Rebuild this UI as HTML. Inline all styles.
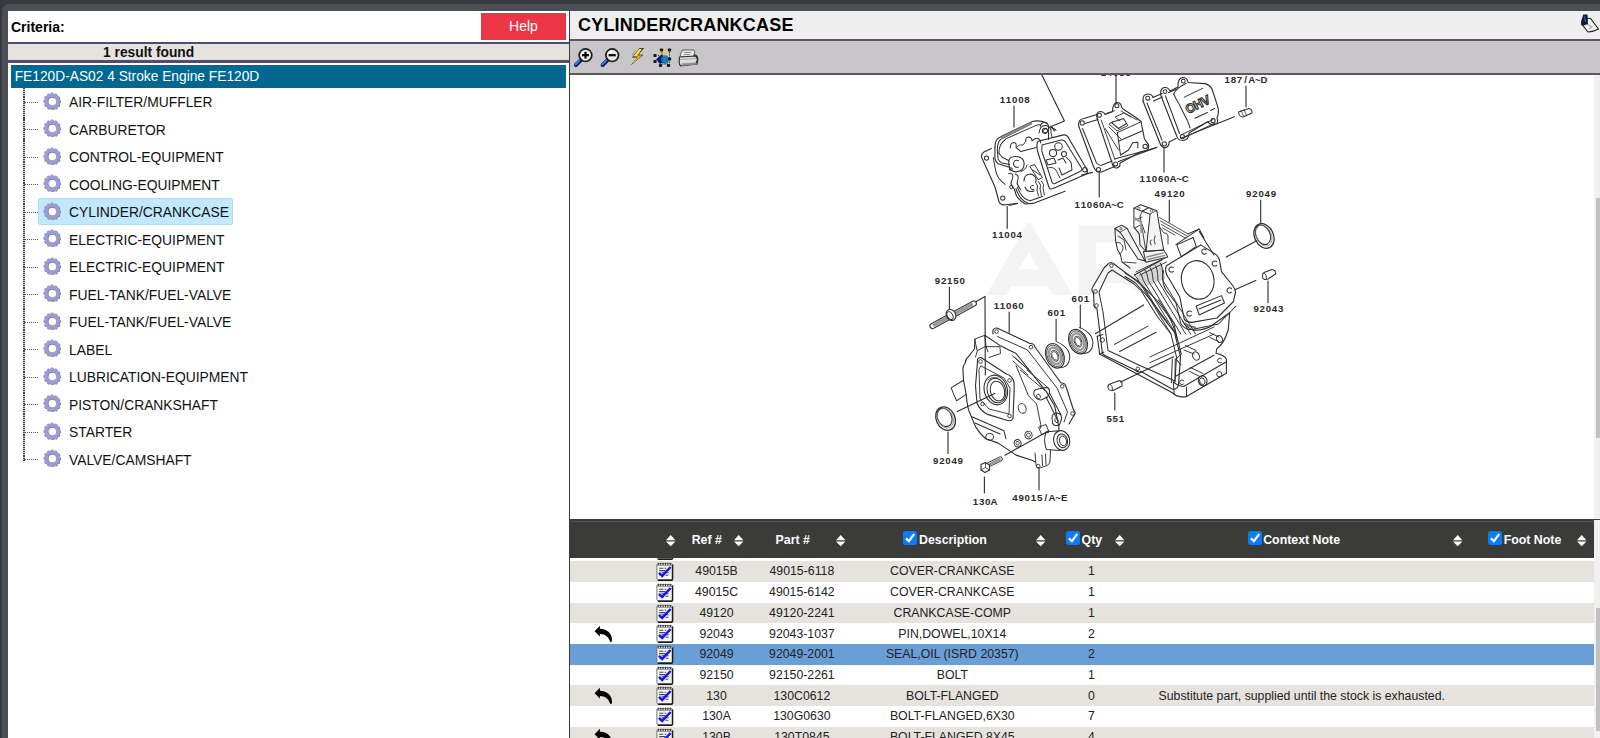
<!DOCTYPE html>
<html><head><meta charset="utf-8">
<style>
*{margin:0;padding:0;box-sizing:border-box}
html,body{width:1600px;height:738px;overflow:hidden;background:#36393e;font-family:"Liberation Sans",sans-serif;color:#111}
.a{position:absolute}
#frame{left:2px;top:4px;width:1700px;height:800px;background:#4c4f55;border-radius:7px 0 0 0}
#left{left:8px;top:11px;width:561px;height:727px;background:#fff;overflow:hidden}
#crit{left:3px;top:8px;font-size:14px;font-weight:bold;color:#000;line-height:16px}
#help{left:473px;top:2px;width:85px;height:26.5px;background:#ee3545;color:#fff;font-size:14px;text-align:center;line-height:26px}
#l1{left:0;top:31px;width:561px;height:2px;background:#4e4d6e}
#res{left:0;top:33px;width:561px;height:16px;background:#e6e3df}
#restx{left:95px;top:1px;font-size:13.8px;font-weight:bold;line-height:16px;color:#111;white-space:nowrap}
#l2{left:0;top:49px;width:561px;height:2.5px;background:#4e4d6e}
#teal{left:2.7px;top:54px;width:555.5px;height:23px;background:#006890;color:#fff;font-size:13.75px;line-height:24px;padding-left:4px;white-space:nowrap}
#divider{left:569px;top:11px;width:1.2px;height:727px;background:#3a3a3a}
#right{left:570px;top:11px;width:1030px;height:727px;background:#fff;overflow:hidden}
#hdr{left:0;top:0;width:1030px;height:27.5px;background:#eeeeee}
#title{left:8px;top:4.3px;letter-spacing:0.2px;font-size:18px;font-weight:bold;color:#000;line-height:20px;white-space:nowrap}
#hb{left:0;top:27.5px;width:1030px;height:2px;background:#5a5a5a}
#tb{left:0;top:29.5px;width:1030px;height:33px;background:#c8c6c8}
#tbb{left:0;top:62.3px;width:1030px;height:1.5px;background:#5a5a5a}
.ti{position:absolute;left:61px;font-size:13.85px;line-height:16px;color:#111;white-space:nowrap}
.gear{position:absolute;left:35px;width:18px;height:18px}
.vd{position:absolute;left:14.9px;width:1.7px;background:repeating-linear-gradient(to bottom,#444 0 1.1px,#c4c4c4 1.1px 2.1px)}
.hd{position:absolute;left:16px;width:14px;border-top:1px dotted #555;height:0}
#sel{left:30.2px;top:187.2px;width:195.2px;height:27.3px;background:#c1e8fb;border:1px solid #b0dcf2;border-radius:2px}
#imgarea{left:0;top:63.8px;width:1024px;height:444.2px;background:#fff}
#vsb{left:1024px;top:63.8px;width:6px;height:444.2px;background:#f0f0f0}
#thhdr{left:1px;top:507.7px;width:1029px;height:39px;background:#3b3c3a;box-shadow:-1px 0 0 #3b3c3a}
.th{position:absolute;top:13.8px;transform:scaleY(1.1);transform-origin:50% 2.7px;font-size:12.35px;font-weight:bold;color:#fff;white-space:nowrap;line-height:14px}
.cb{width:14px;height:14px;background:#0a7aff;border-radius:2.5px}
.row{position:absolute;left:1px;width:1023px;height:20.75px;overflow:hidden}
.row .c{position:absolute;top:2.3px;transform:scaleY(1.1);transform-origin:50% 1.3px;font-size:12.3px;line-height:14px;color:#222;white-space:nowrap;text-align:center}
#tsb{left:1024px;top:546.7px;width:6px;height:200px;background:#f0f0f0}
</style></head><body>
<div id="frame" class="a"></div>
<div id="left" class="a">
  <div id="crit" class="a">Criteria:</div>
  <div id="help" class="a">Help</div>
  <div id="l1" class="a"></div>
  <div id="res" class="a"><div id="restx" class="a">1 result found</div></div>
  <div id="l2" class="a"></div>
  <div id="teal" class="a">FE120D-AS02 4 Stroke Engine FE120D</div>
  <div id="sel" class="a"></div>

<div class="vd" style="top:77.0px;height:372.5px"></div>
<div class="hd" style="top:90.7px"></div>
<svg class="gear" style="top:80.6px" viewBox="0 0 18 18"><g transform="translate(9,9.2)"><path d="M7.58 -1.38 L8.65 -0.96 L8.65 0.96 L7.58 1.38 L7.25 2.59 L7.97 3.50 L7.01 5.15 L5.87 4.98 L4.98 5.87 L5.15 7.01 L3.50 7.97 L2.59 7.25 L1.38 7.58 L0.96 8.65 L-0.96 8.65 L-1.38 7.58 L-2.59 7.25 L-3.50 7.97 L-5.15 7.01 L-4.98 5.87 L-5.87 4.98 L-7.01 5.15 L-7.97 3.50 L-7.25 2.59 L-7.58 1.38 L-8.65 0.96 L-8.65 -0.96 L-7.58 -1.38 L-7.25 -2.59 L-7.97 -3.50 L-7.01 -5.15 L-5.87 -4.98 L-4.98 -5.87 L-5.15 -7.01 L-3.50 -7.97 L-2.59 -7.25 L-1.38 -7.58 L-0.96 -8.65 L0.96 -8.65 L1.38 -7.58 L2.59 -7.25 L3.50 -7.97 L5.15 -7.01 L4.98 -5.87 L5.87 -4.98 L7.01 -5.15 L7.97 -3.50 L7.25 -2.59Z" fill="#77778a" transform="translate(0.5,0.6)"/><path d="M7.58 -1.38 L8.65 -0.96 L8.65 0.96 L7.58 1.38 L7.25 2.59 L7.97 3.50 L7.01 5.15 L5.87 4.98 L4.98 5.87 L5.15 7.01 L3.50 7.97 L2.59 7.25 L1.38 7.58 L0.96 8.65 L-0.96 8.65 L-1.38 7.58 L-2.59 7.25 L-3.50 7.97 L-5.15 7.01 L-4.98 5.87 L-5.87 4.98 L-7.01 5.15 L-7.97 3.50 L-7.25 2.59 L-7.58 1.38 L-8.65 0.96 L-8.65 -0.96 L-7.58 -1.38 L-7.25 -2.59 L-7.97 -3.50 L-7.01 -5.15 L-5.87 -4.98 L-4.98 -5.87 L-5.15 -7.01 L-3.50 -7.97 L-2.59 -7.25 L-1.38 -7.58 L-0.96 -8.65 L0.96 -8.65 L1.38 -7.58 L2.59 -7.25 L3.50 -7.97 L5.15 -7.01 L4.98 -5.87 L5.87 -4.98 L7.01 -5.15 L7.97 -3.50 L7.25 -2.59Z" fill="#9c9cd2"/><circle r="4.1" fill="#7a7a9a"/><circle r="3.8" cx="0.35" cy="0.35" fill="#fff"/></g></svg>
<div class="ti" style="top:83.0px">AIR-FILTER/MUFFLER</div>
<div class="hd" style="top:118.2px"></div>
<svg class="gear" style="top:108.1px" viewBox="0 0 18 18"><g transform="translate(9,9.2)"><path d="M7.58 -1.38 L8.65 -0.96 L8.65 0.96 L7.58 1.38 L7.25 2.59 L7.97 3.50 L7.01 5.15 L5.87 4.98 L4.98 5.87 L5.15 7.01 L3.50 7.97 L2.59 7.25 L1.38 7.58 L0.96 8.65 L-0.96 8.65 L-1.38 7.58 L-2.59 7.25 L-3.50 7.97 L-5.15 7.01 L-4.98 5.87 L-5.87 4.98 L-7.01 5.15 L-7.97 3.50 L-7.25 2.59 L-7.58 1.38 L-8.65 0.96 L-8.65 -0.96 L-7.58 -1.38 L-7.25 -2.59 L-7.97 -3.50 L-7.01 -5.15 L-5.87 -4.98 L-4.98 -5.87 L-5.15 -7.01 L-3.50 -7.97 L-2.59 -7.25 L-1.38 -7.58 L-0.96 -8.65 L0.96 -8.65 L1.38 -7.58 L2.59 -7.25 L3.50 -7.97 L5.15 -7.01 L4.98 -5.87 L5.87 -4.98 L7.01 -5.15 L7.97 -3.50 L7.25 -2.59Z" fill="#77778a" transform="translate(0.5,0.6)"/><path d="M7.58 -1.38 L8.65 -0.96 L8.65 0.96 L7.58 1.38 L7.25 2.59 L7.97 3.50 L7.01 5.15 L5.87 4.98 L4.98 5.87 L5.15 7.01 L3.50 7.97 L2.59 7.25 L1.38 7.58 L0.96 8.65 L-0.96 8.65 L-1.38 7.58 L-2.59 7.25 L-3.50 7.97 L-5.15 7.01 L-4.98 5.87 L-5.87 4.98 L-7.01 5.15 L-7.97 3.50 L-7.25 2.59 L-7.58 1.38 L-8.65 0.96 L-8.65 -0.96 L-7.58 -1.38 L-7.25 -2.59 L-7.97 -3.50 L-7.01 -5.15 L-5.87 -4.98 L-4.98 -5.87 L-5.15 -7.01 L-3.50 -7.97 L-2.59 -7.25 L-1.38 -7.58 L-0.96 -8.65 L0.96 -8.65 L1.38 -7.58 L2.59 -7.25 L3.50 -7.97 L5.15 -7.01 L4.98 -5.87 L5.87 -4.98 L7.01 -5.15 L7.97 -3.50 L7.25 -2.59Z" fill="#9c9cd2"/><circle r="4.1" fill="#7a7a9a"/><circle r="3.8" cx="0.35" cy="0.35" fill="#fff"/></g></svg>
<div class="ti" style="top:110.5px">CARBURETOR</div>
<div class="hd" style="top:145.7px"></div>
<svg class="gear" style="top:135.6px" viewBox="0 0 18 18"><g transform="translate(9,9.2)"><path d="M7.58 -1.38 L8.65 -0.96 L8.65 0.96 L7.58 1.38 L7.25 2.59 L7.97 3.50 L7.01 5.15 L5.87 4.98 L4.98 5.87 L5.15 7.01 L3.50 7.97 L2.59 7.25 L1.38 7.58 L0.96 8.65 L-0.96 8.65 L-1.38 7.58 L-2.59 7.25 L-3.50 7.97 L-5.15 7.01 L-4.98 5.87 L-5.87 4.98 L-7.01 5.15 L-7.97 3.50 L-7.25 2.59 L-7.58 1.38 L-8.65 0.96 L-8.65 -0.96 L-7.58 -1.38 L-7.25 -2.59 L-7.97 -3.50 L-7.01 -5.15 L-5.87 -4.98 L-4.98 -5.87 L-5.15 -7.01 L-3.50 -7.97 L-2.59 -7.25 L-1.38 -7.58 L-0.96 -8.65 L0.96 -8.65 L1.38 -7.58 L2.59 -7.25 L3.50 -7.97 L5.15 -7.01 L4.98 -5.87 L5.87 -4.98 L7.01 -5.15 L7.97 -3.50 L7.25 -2.59Z" fill="#77778a" transform="translate(0.5,0.6)"/><path d="M7.58 -1.38 L8.65 -0.96 L8.65 0.96 L7.58 1.38 L7.25 2.59 L7.97 3.50 L7.01 5.15 L5.87 4.98 L4.98 5.87 L5.15 7.01 L3.50 7.97 L2.59 7.25 L1.38 7.58 L0.96 8.65 L-0.96 8.65 L-1.38 7.58 L-2.59 7.25 L-3.50 7.97 L-5.15 7.01 L-4.98 5.87 L-5.87 4.98 L-7.01 5.15 L-7.97 3.50 L-7.25 2.59 L-7.58 1.38 L-8.65 0.96 L-8.65 -0.96 L-7.58 -1.38 L-7.25 -2.59 L-7.97 -3.50 L-7.01 -5.15 L-5.87 -4.98 L-4.98 -5.87 L-5.15 -7.01 L-3.50 -7.97 L-2.59 -7.25 L-1.38 -7.58 L-0.96 -8.65 L0.96 -8.65 L1.38 -7.58 L2.59 -7.25 L3.50 -7.97 L5.15 -7.01 L4.98 -5.87 L5.87 -4.98 L7.01 -5.15 L7.97 -3.50 L7.25 -2.59Z" fill="#9c9cd2"/><circle r="4.1" fill="#7a7a9a"/><circle r="3.8" cx="0.35" cy="0.35" fill="#fff"/></g></svg>
<div class="ti" style="top:138.0px">CONTROL-EQUIPMENT</div>
<div class="hd" style="top:173.2px"></div>
<svg class="gear" style="top:163.1px" viewBox="0 0 18 18"><g transform="translate(9,9.2)"><path d="M7.58 -1.38 L8.65 -0.96 L8.65 0.96 L7.58 1.38 L7.25 2.59 L7.97 3.50 L7.01 5.15 L5.87 4.98 L4.98 5.87 L5.15 7.01 L3.50 7.97 L2.59 7.25 L1.38 7.58 L0.96 8.65 L-0.96 8.65 L-1.38 7.58 L-2.59 7.25 L-3.50 7.97 L-5.15 7.01 L-4.98 5.87 L-5.87 4.98 L-7.01 5.15 L-7.97 3.50 L-7.25 2.59 L-7.58 1.38 L-8.65 0.96 L-8.65 -0.96 L-7.58 -1.38 L-7.25 -2.59 L-7.97 -3.50 L-7.01 -5.15 L-5.87 -4.98 L-4.98 -5.87 L-5.15 -7.01 L-3.50 -7.97 L-2.59 -7.25 L-1.38 -7.58 L-0.96 -8.65 L0.96 -8.65 L1.38 -7.58 L2.59 -7.25 L3.50 -7.97 L5.15 -7.01 L4.98 -5.87 L5.87 -4.98 L7.01 -5.15 L7.97 -3.50 L7.25 -2.59Z" fill="#77778a" transform="translate(0.5,0.6)"/><path d="M7.58 -1.38 L8.65 -0.96 L8.65 0.96 L7.58 1.38 L7.25 2.59 L7.97 3.50 L7.01 5.15 L5.87 4.98 L4.98 5.87 L5.15 7.01 L3.50 7.97 L2.59 7.25 L1.38 7.58 L0.96 8.65 L-0.96 8.65 L-1.38 7.58 L-2.59 7.25 L-3.50 7.97 L-5.15 7.01 L-4.98 5.87 L-5.87 4.98 L-7.01 5.15 L-7.97 3.50 L-7.25 2.59 L-7.58 1.38 L-8.65 0.96 L-8.65 -0.96 L-7.58 -1.38 L-7.25 -2.59 L-7.97 -3.50 L-7.01 -5.15 L-5.87 -4.98 L-4.98 -5.87 L-5.15 -7.01 L-3.50 -7.97 L-2.59 -7.25 L-1.38 -7.58 L-0.96 -8.65 L0.96 -8.65 L1.38 -7.58 L2.59 -7.25 L3.50 -7.97 L5.15 -7.01 L4.98 -5.87 L5.87 -4.98 L7.01 -5.15 L7.97 -3.50 L7.25 -2.59Z" fill="#9c9cd2"/><circle r="4.1" fill="#7a7a9a"/><circle r="3.8" cx="0.35" cy="0.35" fill="#fff"/></g></svg>
<div class="ti" style="top:165.5px">COOLING-EQUIPMENT</div>
<div class="hd" style="top:200.7px"></div>
<svg class="gear" style="top:190.6px" viewBox="0 0 18 18"><g transform="translate(9,9.2)"><path d="M7.58 -1.38 L8.65 -0.96 L8.65 0.96 L7.58 1.38 L7.25 2.59 L7.97 3.50 L7.01 5.15 L5.87 4.98 L4.98 5.87 L5.15 7.01 L3.50 7.97 L2.59 7.25 L1.38 7.58 L0.96 8.65 L-0.96 8.65 L-1.38 7.58 L-2.59 7.25 L-3.50 7.97 L-5.15 7.01 L-4.98 5.87 L-5.87 4.98 L-7.01 5.15 L-7.97 3.50 L-7.25 2.59 L-7.58 1.38 L-8.65 0.96 L-8.65 -0.96 L-7.58 -1.38 L-7.25 -2.59 L-7.97 -3.50 L-7.01 -5.15 L-5.87 -4.98 L-4.98 -5.87 L-5.15 -7.01 L-3.50 -7.97 L-2.59 -7.25 L-1.38 -7.58 L-0.96 -8.65 L0.96 -8.65 L1.38 -7.58 L2.59 -7.25 L3.50 -7.97 L5.15 -7.01 L4.98 -5.87 L5.87 -4.98 L7.01 -5.15 L7.97 -3.50 L7.25 -2.59Z" fill="#77778a" transform="translate(0.5,0.6)"/><path d="M7.58 -1.38 L8.65 -0.96 L8.65 0.96 L7.58 1.38 L7.25 2.59 L7.97 3.50 L7.01 5.15 L5.87 4.98 L4.98 5.87 L5.15 7.01 L3.50 7.97 L2.59 7.25 L1.38 7.58 L0.96 8.65 L-0.96 8.65 L-1.38 7.58 L-2.59 7.25 L-3.50 7.97 L-5.15 7.01 L-4.98 5.87 L-5.87 4.98 L-7.01 5.15 L-7.97 3.50 L-7.25 2.59 L-7.58 1.38 L-8.65 0.96 L-8.65 -0.96 L-7.58 -1.38 L-7.25 -2.59 L-7.97 -3.50 L-7.01 -5.15 L-5.87 -4.98 L-4.98 -5.87 L-5.15 -7.01 L-3.50 -7.97 L-2.59 -7.25 L-1.38 -7.58 L-0.96 -8.65 L0.96 -8.65 L1.38 -7.58 L2.59 -7.25 L3.50 -7.97 L5.15 -7.01 L4.98 -5.87 L5.87 -4.98 L7.01 -5.15 L7.97 -3.50 L7.25 -2.59Z" fill="#9c9cd2"/><circle r="4.1" fill="#7a7a9a"/><circle r="3.8" cx="0.35" cy="0.35" fill="#fff"/></g></svg>
<div class="ti" style="top:193.0px">CYLINDER/CRANKCASE</div>
<div class="hd" style="top:228.2px"></div>
<svg class="gear" style="top:218.1px" viewBox="0 0 18 18"><g transform="translate(9,9.2)"><path d="M7.58 -1.38 L8.65 -0.96 L8.65 0.96 L7.58 1.38 L7.25 2.59 L7.97 3.50 L7.01 5.15 L5.87 4.98 L4.98 5.87 L5.15 7.01 L3.50 7.97 L2.59 7.25 L1.38 7.58 L0.96 8.65 L-0.96 8.65 L-1.38 7.58 L-2.59 7.25 L-3.50 7.97 L-5.15 7.01 L-4.98 5.87 L-5.87 4.98 L-7.01 5.15 L-7.97 3.50 L-7.25 2.59 L-7.58 1.38 L-8.65 0.96 L-8.65 -0.96 L-7.58 -1.38 L-7.25 -2.59 L-7.97 -3.50 L-7.01 -5.15 L-5.87 -4.98 L-4.98 -5.87 L-5.15 -7.01 L-3.50 -7.97 L-2.59 -7.25 L-1.38 -7.58 L-0.96 -8.65 L0.96 -8.65 L1.38 -7.58 L2.59 -7.25 L3.50 -7.97 L5.15 -7.01 L4.98 -5.87 L5.87 -4.98 L7.01 -5.15 L7.97 -3.50 L7.25 -2.59Z" fill="#77778a" transform="translate(0.5,0.6)"/><path d="M7.58 -1.38 L8.65 -0.96 L8.65 0.96 L7.58 1.38 L7.25 2.59 L7.97 3.50 L7.01 5.15 L5.87 4.98 L4.98 5.87 L5.15 7.01 L3.50 7.97 L2.59 7.25 L1.38 7.58 L0.96 8.65 L-0.96 8.65 L-1.38 7.58 L-2.59 7.25 L-3.50 7.97 L-5.15 7.01 L-4.98 5.87 L-5.87 4.98 L-7.01 5.15 L-7.97 3.50 L-7.25 2.59 L-7.58 1.38 L-8.65 0.96 L-8.65 -0.96 L-7.58 -1.38 L-7.25 -2.59 L-7.97 -3.50 L-7.01 -5.15 L-5.87 -4.98 L-4.98 -5.87 L-5.15 -7.01 L-3.50 -7.97 L-2.59 -7.25 L-1.38 -7.58 L-0.96 -8.65 L0.96 -8.65 L1.38 -7.58 L2.59 -7.25 L3.50 -7.97 L5.15 -7.01 L4.98 -5.87 L5.87 -4.98 L7.01 -5.15 L7.97 -3.50 L7.25 -2.59Z" fill="#9c9cd2"/><circle r="4.1" fill="#7a7a9a"/><circle r="3.8" cx="0.35" cy="0.35" fill="#fff"/></g></svg>
<div class="ti" style="top:220.5px">ELECTRIC-EQUIPMENT</div>
<div class="hd" style="top:255.7px"></div>
<svg class="gear" style="top:245.6px" viewBox="0 0 18 18"><g transform="translate(9,9.2)"><path d="M7.58 -1.38 L8.65 -0.96 L8.65 0.96 L7.58 1.38 L7.25 2.59 L7.97 3.50 L7.01 5.15 L5.87 4.98 L4.98 5.87 L5.15 7.01 L3.50 7.97 L2.59 7.25 L1.38 7.58 L0.96 8.65 L-0.96 8.65 L-1.38 7.58 L-2.59 7.25 L-3.50 7.97 L-5.15 7.01 L-4.98 5.87 L-5.87 4.98 L-7.01 5.15 L-7.97 3.50 L-7.25 2.59 L-7.58 1.38 L-8.65 0.96 L-8.65 -0.96 L-7.58 -1.38 L-7.25 -2.59 L-7.97 -3.50 L-7.01 -5.15 L-5.87 -4.98 L-4.98 -5.87 L-5.15 -7.01 L-3.50 -7.97 L-2.59 -7.25 L-1.38 -7.58 L-0.96 -8.65 L0.96 -8.65 L1.38 -7.58 L2.59 -7.25 L3.50 -7.97 L5.15 -7.01 L4.98 -5.87 L5.87 -4.98 L7.01 -5.15 L7.97 -3.50 L7.25 -2.59Z" fill="#77778a" transform="translate(0.5,0.6)"/><path d="M7.58 -1.38 L8.65 -0.96 L8.65 0.96 L7.58 1.38 L7.25 2.59 L7.97 3.50 L7.01 5.15 L5.87 4.98 L4.98 5.87 L5.15 7.01 L3.50 7.97 L2.59 7.25 L1.38 7.58 L0.96 8.65 L-0.96 8.65 L-1.38 7.58 L-2.59 7.25 L-3.50 7.97 L-5.15 7.01 L-4.98 5.87 L-5.87 4.98 L-7.01 5.15 L-7.97 3.50 L-7.25 2.59 L-7.58 1.38 L-8.65 0.96 L-8.65 -0.96 L-7.58 -1.38 L-7.25 -2.59 L-7.97 -3.50 L-7.01 -5.15 L-5.87 -4.98 L-4.98 -5.87 L-5.15 -7.01 L-3.50 -7.97 L-2.59 -7.25 L-1.38 -7.58 L-0.96 -8.65 L0.96 -8.65 L1.38 -7.58 L2.59 -7.25 L3.50 -7.97 L5.15 -7.01 L4.98 -5.87 L5.87 -4.98 L7.01 -5.15 L7.97 -3.50 L7.25 -2.59Z" fill="#9c9cd2"/><circle r="4.1" fill="#7a7a9a"/><circle r="3.8" cx="0.35" cy="0.35" fill="#fff"/></g></svg>
<div class="ti" style="top:248.0px">ELECTRIC-EQUIPMENT</div>
<div class="hd" style="top:283.2px"></div>
<svg class="gear" style="top:273.1px" viewBox="0 0 18 18"><g transform="translate(9,9.2)"><path d="M7.58 -1.38 L8.65 -0.96 L8.65 0.96 L7.58 1.38 L7.25 2.59 L7.97 3.50 L7.01 5.15 L5.87 4.98 L4.98 5.87 L5.15 7.01 L3.50 7.97 L2.59 7.25 L1.38 7.58 L0.96 8.65 L-0.96 8.65 L-1.38 7.58 L-2.59 7.25 L-3.50 7.97 L-5.15 7.01 L-4.98 5.87 L-5.87 4.98 L-7.01 5.15 L-7.97 3.50 L-7.25 2.59 L-7.58 1.38 L-8.65 0.96 L-8.65 -0.96 L-7.58 -1.38 L-7.25 -2.59 L-7.97 -3.50 L-7.01 -5.15 L-5.87 -4.98 L-4.98 -5.87 L-5.15 -7.01 L-3.50 -7.97 L-2.59 -7.25 L-1.38 -7.58 L-0.96 -8.65 L0.96 -8.65 L1.38 -7.58 L2.59 -7.25 L3.50 -7.97 L5.15 -7.01 L4.98 -5.87 L5.87 -4.98 L7.01 -5.15 L7.97 -3.50 L7.25 -2.59Z" fill="#77778a" transform="translate(0.5,0.6)"/><path d="M7.58 -1.38 L8.65 -0.96 L8.65 0.96 L7.58 1.38 L7.25 2.59 L7.97 3.50 L7.01 5.15 L5.87 4.98 L4.98 5.87 L5.15 7.01 L3.50 7.97 L2.59 7.25 L1.38 7.58 L0.96 8.65 L-0.96 8.65 L-1.38 7.58 L-2.59 7.25 L-3.50 7.97 L-5.15 7.01 L-4.98 5.87 L-5.87 4.98 L-7.01 5.15 L-7.97 3.50 L-7.25 2.59 L-7.58 1.38 L-8.65 0.96 L-8.65 -0.96 L-7.58 -1.38 L-7.25 -2.59 L-7.97 -3.50 L-7.01 -5.15 L-5.87 -4.98 L-4.98 -5.87 L-5.15 -7.01 L-3.50 -7.97 L-2.59 -7.25 L-1.38 -7.58 L-0.96 -8.65 L0.96 -8.65 L1.38 -7.58 L2.59 -7.25 L3.50 -7.97 L5.15 -7.01 L4.98 -5.87 L5.87 -4.98 L7.01 -5.15 L7.97 -3.50 L7.25 -2.59Z" fill="#9c9cd2"/><circle r="4.1" fill="#7a7a9a"/><circle r="3.8" cx="0.35" cy="0.35" fill="#fff"/></g></svg>
<div class="ti" style="top:275.5px">FUEL-TANK/FUEL-VALVE</div>
<div class="hd" style="top:310.7px"></div>
<svg class="gear" style="top:300.6px" viewBox="0 0 18 18"><g transform="translate(9,9.2)"><path d="M7.58 -1.38 L8.65 -0.96 L8.65 0.96 L7.58 1.38 L7.25 2.59 L7.97 3.50 L7.01 5.15 L5.87 4.98 L4.98 5.87 L5.15 7.01 L3.50 7.97 L2.59 7.25 L1.38 7.58 L0.96 8.65 L-0.96 8.65 L-1.38 7.58 L-2.59 7.25 L-3.50 7.97 L-5.15 7.01 L-4.98 5.87 L-5.87 4.98 L-7.01 5.15 L-7.97 3.50 L-7.25 2.59 L-7.58 1.38 L-8.65 0.96 L-8.65 -0.96 L-7.58 -1.38 L-7.25 -2.59 L-7.97 -3.50 L-7.01 -5.15 L-5.87 -4.98 L-4.98 -5.87 L-5.15 -7.01 L-3.50 -7.97 L-2.59 -7.25 L-1.38 -7.58 L-0.96 -8.65 L0.96 -8.65 L1.38 -7.58 L2.59 -7.25 L3.50 -7.97 L5.15 -7.01 L4.98 -5.87 L5.87 -4.98 L7.01 -5.15 L7.97 -3.50 L7.25 -2.59Z" fill="#77778a" transform="translate(0.5,0.6)"/><path d="M7.58 -1.38 L8.65 -0.96 L8.65 0.96 L7.58 1.38 L7.25 2.59 L7.97 3.50 L7.01 5.15 L5.87 4.98 L4.98 5.87 L5.15 7.01 L3.50 7.97 L2.59 7.25 L1.38 7.58 L0.96 8.65 L-0.96 8.65 L-1.38 7.58 L-2.59 7.25 L-3.50 7.97 L-5.15 7.01 L-4.98 5.87 L-5.87 4.98 L-7.01 5.15 L-7.97 3.50 L-7.25 2.59 L-7.58 1.38 L-8.65 0.96 L-8.65 -0.96 L-7.58 -1.38 L-7.25 -2.59 L-7.97 -3.50 L-7.01 -5.15 L-5.87 -4.98 L-4.98 -5.87 L-5.15 -7.01 L-3.50 -7.97 L-2.59 -7.25 L-1.38 -7.58 L-0.96 -8.65 L0.96 -8.65 L1.38 -7.58 L2.59 -7.25 L3.50 -7.97 L5.15 -7.01 L4.98 -5.87 L5.87 -4.98 L7.01 -5.15 L7.97 -3.50 L7.25 -2.59Z" fill="#9c9cd2"/><circle r="4.1" fill="#7a7a9a"/><circle r="3.8" cx="0.35" cy="0.35" fill="#fff"/></g></svg>
<div class="ti" style="top:303.0px">FUEL-TANK/FUEL-VALVE</div>
<div class="hd" style="top:338.2px"></div>
<svg class="gear" style="top:328.1px" viewBox="0 0 18 18"><g transform="translate(9,9.2)"><path d="M7.58 -1.38 L8.65 -0.96 L8.65 0.96 L7.58 1.38 L7.25 2.59 L7.97 3.50 L7.01 5.15 L5.87 4.98 L4.98 5.87 L5.15 7.01 L3.50 7.97 L2.59 7.25 L1.38 7.58 L0.96 8.65 L-0.96 8.65 L-1.38 7.58 L-2.59 7.25 L-3.50 7.97 L-5.15 7.01 L-4.98 5.87 L-5.87 4.98 L-7.01 5.15 L-7.97 3.50 L-7.25 2.59 L-7.58 1.38 L-8.65 0.96 L-8.65 -0.96 L-7.58 -1.38 L-7.25 -2.59 L-7.97 -3.50 L-7.01 -5.15 L-5.87 -4.98 L-4.98 -5.87 L-5.15 -7.01 L-3.50 -7.97 L-2.59 -7.25 L-1.38 -7.58 L-0.96 -8.65 L0.96 -8.65 L1.38 -7.58 L2.59 -7.25 L3.50 -7.97 L5.15 -7.01 L4.98 -5.87 L5.87 -4.98 L7.01 -5.15 L7.97 -3.50 L7.25 -2.59Z" fill="#77778a" transform="translate(0.5,0.6)"/><path d="M7.58 -1.38 L8.65 -0.96 L8.65 0.96 L7.58 1.38 L7.25 2.59 L7.97 3.50 L7.01 5.15 L5.87 4.98 L4.98 5.87 L5.15 7.01 L3.50 7.97 L2.59 7.25 L1.38 7.58 L0.96 8.65 L-0.96 8.65 L-1.38 7.58 L-2.59 7.25 L-3.50 7.97 L-5.15 7.01 L-4.98 5.87 L-5.87 4.98 L-7.01 5.15 L-7.97 3.50 L-7.25 2.59 L-7.58 1.38 L-8.65 0.96 L-8.65 -0.96 L-7.58 -1.38 L-7.25 -2.59 L-7.97 -3.50 L-7.01 -5.15 L-5.87 -4.98 L-4.98 -5.87 L-5.15 -7.01 L-3.50 -7.97 L-2.59 -7.25 L-1.38 -7.58 L-0.96 -8.65 L0.96 -8.65 L1.38 -7.58 L2.59 -7.25 L3.50 -7.97 L5.15 -7.01 L4.98 -5.87 L5.87 -4.98 L7.01 -5.15 L7.97 -3.50 L7.25 -2.59Z" fill="#9c9cd2"/><circle r="4.1" fill="#7a7a9a"/><circle r="3.8" cx="0.35" cy="0.35" fill="#fff"/></g></svg>
<div class="ti" style="top:330.5px">LABEL</div>
<div class="hd" style="top:365.7px"></div>
<svg class="gear" style="top:355.6px" viewBox="0 0 18 18"><g transform="translate(9,9.2)"><path d="M7.58 -1.38 L8.65 -0.96 L8.65 0.96 L7.58 1.38 L7.25 2.59 L7.97 3.50 L7.01 5.15 L5.87 4.98 L4.98 5.87 L5.15 7.01 L3.50 7.97 L2.59 7.25 L1.38 7.58 L0.96 8.65 L-0.96 8.65 L-1.38 7.58 L-2.59 7.25 L-3.50 7.97 L-5.15 7.01 L-4.98 5.87 L-5.87 4.98 L-7.01 5.15 L-7.97 3.50 L-7.25 2.59 L-7.58 1.38 L-8.65 0.96 L-8.65 -0.96 L-7.58 -1.38 L-7.25 -2.59 L-7.97 -3.50 L-7.01 -5.15 L-5.87 -4.98 L-4.98 -5.87 L-5.15 -7.01 L-3.50 -7.97 L-2.59 -7.25 L-1.38 -7.58 L-0.96 -8.65 L0.96 -8.65 L1.38 -7.58 L2.59 -7.25 L3.50 -7.97 L5.15 -7.01 L4.98 -5.87 L5.87 -4.98 L7.01 -5.15 L7.97 -3.50 L7.25 -2.59Z" fill="#77778a" transform="translate(0.5,0.6)"/><path d="M7.58 -1.38 L8.65 -0.96 L8.65 0.96 L7.58 1.38 L7.25 2.59 L7.97 3.50 L7.01 5.15 L5.87 4.98 L4.98 5.87 L5.15 7.01 L3.50 7.97 L2.59 7.25 L1.38 7.58 L0.96 8.65 L-0.96 8.65 L-1.38 7.58 L-2.59 7.25 L-3.50 7.97 L-5.15 7.01 L-4.98 5.87 L-5.87 4.98 L-7.01 5.15 L-7.97 3.50 L-7.25 2.59 L-7.58 1.38 L-8.65 0.96 L-8.65 -0.96 L-7.58 -1.38 L-7.25 -2.59 L-7.97 -3.50 L-7.01 -5.15 L-5.87 -4.98 L-4.98 -5.87 L-5.15 -7.01 L-3.50 -7.97 L-2.59 -7.25 L-1.38 -7.58 L-0.96 -8.65 L0.96 -8.65 L1.38 -7.58 L2.59 -7.25 L3.50 -7.97 L5.15 -7.01 L4.98 -5.87 L5.87 -4.98 L7.01 -5.15 L7.97 -3.50 L7.25 -2.59Z" fill="#9c9cd2"/><circle r="4.1" fill="#7a7a9a"/><circle r="3.8" cx="0.35" cy="0.35" fill="#fff"/></g></svg>
<div class="ti" style="top:358.0px">LUBRICATION-EQUIPMENT</div>
<div class="hd" style="top:393.2px"></div>
<svg class="gear" style="top:383.1px" viewBox="0 0 18 18"><g transform="translate(9,9.2)"><path d="M7.58 -1.38 L8.65 -0.96 L8.65 0.96 L7.58 1.38 L7.25 2.59 L7.97 3.50 L7.01 5.15 L5.87 4.98 L4.98 5.87 L5.15 7.01 L3.50 7.97 L2.59 7.25 L1.38 7.58 L0.96 8.65 L-0.96 8.65 L-1.38 7.58 L-2.59 7.25 L-3.50 7.97 L-5.15 7.01 L-4.98 5.87 L-5.87 4.98 L-7.01 5.15 L-7.97 3.50 L-7.25 2.59 L-7.58 1.38 L-8.65 0.96 L-8.65 -0.96 L-7.58 -1.38 L-7.25 -2.59 L-7.97 -3.50 L-7.01 -5.15 L-5.87 -4.98 L-4.98 -5.87 L-5.15 -7.01 L-3.50 -7.97 L-2.59 -7.25 L-1.38 -7.58 L-0.96 -8.65 L0.96 -8.65 L1.38 -7.58 L2.59 -7.25 L3.50 -7.97 L5.15 -7.01 L4.98 -5.87 L5.87 -4.98 L7.01 -5.15 L7.97 -3.50 L7.25 -2.59Z" fill="#77778a" transform="translate(0.5,0.6)"/><path d="M7.58 -1.38 L8.65 -0.96 L8.65 0.96 L7.58 1.38 L7.25 2.59 L7.97 3.50 L7.01 5.15 L5.87 4.98 L4.98 5.87 L5.15 7.01 L3.50 7.97 L2.59 7.25 L1.38 7.58 L0.96 8.65 L-0.96 8.65 L-1.38 7.58 L-2.59 7.25 L-3.50 7.97 L-5.15 7.01 L-4.98 5.87 L-5.87 4.98 L-7.01 5.15 L-7.97 3.50 L-7.25 2.59 L-7.58 1.38 L-8.65 0.96 L-8.65 -0.96 L-7.58 -1.38 L-7.25 -2.59 L-7.97 -3.50 L-7.01 -5.15 L-5.87 -4.98 L-4.98 -5.87 L-5.15 -7.01 L-3.50 -7.97 L-2.59 -7.25 L-1.38 -7.58 L-0.96 -8.65 L0.96 -8.65 L1.38 -7.58 L2.59 -7.25 L3.50 -7.97 L5.15 -7.01 L4.98 -5.87 L5.87 -4.98 L7.01 -5.15 L7.97 -3.50 L7.25 -2.59Z" fill="#9c9cd2"/><circle r="4.1" fill="#7a7a9a"/><circle r="3.8" cx="0.35" cy="0.35" fill="#fff"/></g></svg>
<div class="ti" style="top:385.5px">PISTON/CRANKSHAFT</div>
<div class="hd" style="top:420.7px"></div>
<svg class="gear" style="top:410.6px" viewBox="0 0 18 18"><g transform="translate(9,9.2)"><path d="M7.58 -1.38 L8.65 -0.96 L8.65 0.96 L7.58 1.38 L7.25 2.59 L7.97 3.50 L7.01 5.15 L5.87 4.98 L4.98 5.87 L5.15 7.01 L3.50 7.97 L2.59 7.25 L1.38 7.58 L0.96 8.65 L-0.96 8.65 L-1.38 7.58 L-2.59 7.25 L-3.50 7.97 L-5.15 7.01 L-4.98 5.87 L-5.87 4.98 L-7.01 5.15 L-7.97 3.50 L-7.25 2.59 L-7.58 1.38 L-8.65 0.96 L-8.65 -0.96 L-7.58 -1.38 L-7.25 -2.59 L-7.97 -3.50 L-7.01 -5.15 L-5.87 -4.98 L-4.98 -5.87 L-5.15 -7.01 L-3.50 -7.97 L-2.59 -7.25 L-1.38 -7.58 L-0.96 -8.65 L0.96 -8.65 L1.38 -7.58 L2.59 -7.25 L3.50 -7.97 L5.15 -7.01 L4.98 -5.87 L5.87 -4.98 L7.01 -5.15 L7.97 -3.50 L7.25 -2.59Z" fill="#77778a" transform="translate(0.5,0.6)"/><path d="M7.58 -1.38 L8.65 -0.96 L8.65 0.96 L7.58 1.38 L7.25 2.59 L7.97 3.50 L7.01 5.15 L5.87 4.98 L4.98 5.87 L5.15 7.01 L3.50 7.97 L2.59 7.25 L1.38 7.58 L0.96 8.65 L-0.96 8.65 L-1.38 7.58 L-2.59 7.25 L-3.50 7.97 L-5.15 7.01 L-4.98 5.87 L-5.87 4.98 L-7.01 5.15 L-7.97 3.50 L-7.25 2.59 L-7.58 1.38 L-8.65 0.96 L-8.65 -0.96 L-7.58 -1.38 L-7.25 -2.59 L-7.97 -3.50 L-7.01 -5.15 L-5.87 -4.98 L-4.98 -5.87 L-5.15 -7.01 L-3.50 -7.97 L-2.59 -7.25 L-1.38 -7.58 L-0.96 -8.65 L0.96 -8.65 L1.38 -7.58 L2.59 -7.25 L3.50 -7.97 L5.15 -7.01 L4.98 -5.87 L5.87 -4.98 L7.01 -5.15 L7.97 -3.50 L7.25 -2.59Z" fill="#9c9cd2"/><circle r="4.1" fill="#7a7a9a"/><circle r="3.8" cx="0.35" cy="0.35" fill="#fff"/></g></svg>
<div class="ti" style="top:413.0px">STARTER</div>
<div class="hd" style="top:448.2px"></div>
<svg class="gear" style="top:438.1px" viewBox="0 0 18 18"><g transform="translate(9,9.2)"><path d="M7.58 -1.38 L8.65 -0.96 L8.65 0.96 L7.58 1.38 L7.25 2.59 L7.97 3.50 L7.01 5.15 L5.87 4.98 L4.98 5.87 L5.15 7.01 L3.50 7.97 L2.59 7.25 L1.38 7.58 L0.96 8.65 L-0.96 8.65 L-1.38 7.58 L-2.59 7.25 L-3.50 7.97 L-5.15 7.01 L-4.98 5.87 L-5.87 4.98 L-7.01 5.15 L-7.97 3.50 L-7.25 2.59 L-7.58 1.38 L-8.65 0.96 L-8.65 -0.96 L-7.58 -1.38 L-7.25 -2.59 L-7.97 -3.50 L-7.01 -5.15 L-5.87 -4.98 L-4.98 -5.87 L-5.15 -7.01 L-3.50 -7.97 L-2.59 -7.25 L-1.38 -7.58 L-0.96 -8.65 L0.96 -8.65 L1.38 -7.58 L2.59 -7.25 L3.50 -7.97 L5.15 -7.01 L4.98 -5.87 L5.87 -4.98 L7.01 -5.15 L7.97 -3.50 L7.25 -2.59Z" fill="#77778a" transform="translate(0.5,0.6)"/><path d="M7.58 -1.38 L8.65 -0.96 L8.65 0.96 L7.58 1.38 L7.25 2.59 L7.97 3.50 L7.01 5.15 L5.87 4.98 L4.98 5.87 L5.15 7.01 L3.50 7.97 L2.59 7.25 L1.38 7.58 L0.96 8.65 L-0.96 8.65 L-1.38 7.58 L-2.59 7.25 L-3.50 7.97 L-5.15 7.01 L-4.98 5.87 L-5.87 4.98 L-7.01 5.15 L-7.97 3.50 L-7.25 2.59 L-7.58 1.38 L-8.65 0.96 L-8.65 -0.96 L-7.58 -1.38 L-7.25 -2.59 L-7.97 -3.50 L-7.01 -5.15 L-5.87 -4.98 L-4.98 -5.87 L-5.15 -7.01 L-3.50 -7.97 L-2.59 -7.25 L-1.38 -7.58 L-0.96 -8.65 L0.96 -8.65 L1.38 -7.58 L2.59 -7.25 L3.50 -7.97 L5.15 -7.01 L4.98 -5.87 L5.87 -4.98 L7.01 -5.15 L7.97 -3.50 L7.25 -2.59Z" fill="#9c9cd2"/><circle r="4.1" fill="#7a7a9a"/><circle r="3.8" cx="0.35" cy="0.35" fill="#fff"/></g></svg>
<div class="ti" style="top:440.5px">VALVE/CAMSHAFT</div>
</div>
<div id="divider" class="a"></div>
<div id="right" class="a">
<div id="hdr" class="a"><div id="title" class="a">CYLINDER/CRANKCASE</div></div>
<div id="hb" class="a"></div>
<div id="tb" class="a"></div>
<div id="tbb" class="a"></div>
<div id="imgarea" class="a"></div>
<div id="vsb" class="a"></div>

<div id="thhdr" class="a"><div class="a" style="left:0;top:2.4px;width:1023px;height:1.1px;background:#4d5258"></div><div class="a" style="left:1023px;top:1.5px;width:6px;height:37.5px;background:#f0f0f0"></div><svg class="a" style="left:94.5px;top:16.0px" width="10" height="12" viewBox="0 0 10 12"><path d="M4.7 0 L9.4 5.2 L0 5.2Z M0 6.5 L9.4 6.5 L4.7 11.3Z" fill="#fff"/></svg><div class="th" style="left:120.7px">Ref #</div><svg class="a" style="left:162.7px;top:16.0px" width="10" height="12" viewBox="0 0 10 12"><path d="M4.7 0 L9.4 5.2 L0 5.2Z M0 6.5 L9.4 6.5 L4.7 11.3Z" fill="#fff"/></svg><div class="th" style="left:204.6px">Part #</div><svg class="a" style="left:264.6px;top:16.0px" width="10" height="12" viewBox="0 0 10 12"><path d="M4.7 0 L9.4 5.2 L0 5.2Z M0 6.5 L9.4 6.5 L4.7 11.3Z" fill="#fff"/></svg><div class="a cb" style="left:332.1px;top:12.2px"><svg class="a" style="left:0;top:0" width="14" height="14" viewBox="0 0 14 14"><path d="M2.9 7.4 L5.9 10.1 L11.2 3" stroke="#fff" stroke-width="2.1" fill="none"/></svg></div><div class="th" style="left:348.0px">Description</div><svg class="a" style="left:464.6px;top:16.0px" width="10" height="12" viewBox="0 0 10 12"><path d="M4.7 0 L9.4 5.2 L0 5.2Z M0 6.5 L9.4 6.5 L4.7 11.3Z" fill="#fff"/></svg><div class="a cb" style="left:494.6px;top:12.2px"><svg class="a" style="left:0;top:0" width="14" height="14" viewBox="0 0 14 14"><path d="M2.9 7.4 L5.9 10.1 L11.2 3" stroke="#fff" stroke-width="2.1" fill="none"/></svg></div><div class="th" style="left:510.6px">Qty</div><svg class="a" style="left:543.8px;top:16.0px" width="10" height="12" viewBox="0 0 10 12"><path d="M4.7 0 L9.4 5.2 L0 5.2Z M0 6.5 L9.4 6.5 L4.7 11.3Z" fill="#fff"/></svg><div class="a cb" style="left:676.6px;top:12.2px"><svg class="a" style="left:0;top:0" width="14" height="14" viewBox="0 0 14 14"><path d="M2.9 7.4 L5.9 10.1 L11.2 3" stroke="#fff" stroke-width="2.1" fill="none"/></svg></div><div class="th" style="left:692.2px">Context Note</div><svg class="a" style="left:882.2px;top:16.0px" width="10" height="12" viewBox="0 0 10 12"><path d="M4.7 0 L9.4 5.2 L0 5.2Z M0 6.5 L9.4 6.5 L4.7 11.3Z" fill="#fff"/></svg><div class="a cb" style="left:916.6px;top:12.2px"><svg class="a" style="left:0;top:0" width="14" height="14" viewBox="0 0 14 14"><path d="M2.9 7.4 L5.9 10.1 L11.2 3" stroke="#fff" stroke-width="2.1" fill="none"/></svg></div><div class="th" style="left:932.7px">Foot Note</div><svg class="a" style="left:1006.2px;top:16.0px" width="10" height="12" viewBox="0 0 10 12"><path d="M4.7 0 L9.4 5.2 L0 5.2Z M0 6.5 L9.4 6.5 L4.7 11.3Z" fill="#fff"/></svg></div>
<div class="row" style="top:546.70px;height:3.40px;background:#fff"><svg class="a" style="left:85.1px;top:-16.3px" width="18" height="19" viewBox="0 0 18 19"><rect x="0.9" y="1.6" width="15.4" height="16.2" rx="1.4" fill="#f6f6f6" stroke="#777" stroke-width="1"/><path d="M16.6 2.6 V17.2 Q16.6 18.3 15.5 18.3 H1.8" stroke="#1a1a1a" stroke-width="1.4" fill="none"/><path d="M1.8 1.9 H16" stroke="#333" stroke-width="2.2" stroke-dasharray="1 1.4"/><path d="M1.6 3.4 H16.2" stroke="#666" stroke-width="0.7"/><path d="M3.2 6.3 H7.4 M8.6 6.3 H10.2 M3.2 8.6 H9.4 M5.6 10.8 H12.6 M3.6 13.3 H6.2 M9.6 13.3 H12.4" stroke="#444" stroke-width="1.1"/><path d="M3 10.8 L6.2 13.9 L14.6 5" stroke="#1414ff" stroke-width="2.5" fill="none"/></svg></div>
<div class="row" style="top:550.10px;height:21.02px;background:#e6e3df;box-shadow:-1px 0 0 #e6e3df"><svg class="a" style="left:85.1px;top:1.0px" width="18" height="19" viewBox="0 0 18 19"><rect x="0.9" y="1.6" width="15.4" height="16.2" rx="1.4" fill="#f6f6f6" stroke="#777" stroke-width="1"/><path d="M16.6 2.6 V17.2 Q16.6 18.3 15.5 18.3 H1.8" stroke="#1a1a1a" stroke-width="1.4" fill="none"/><path d="M1.8 1.9 H16" stroke="#333" stroke-width="2.2" stroke-dasharray="1 1.4"/><path d="M1.6 3.4 H16.2" stroke="#666" stroke-width="0.7"/><path d="M3.2 6.3 H7.4 M8.6 6.3 H10.2 M3.2 8.6 H9.4 M5.6 10.8 H12.6 M3.6 13.3 H6.2 M9.6 13.3 H12.4" stroke="#444" stroke-width="1.1"/><path d="M3 10.8 L6.2 13.9 L14.6 5" stroke="#1414ff" stroke-width="2.5" fill="none"/></svg><div class="c" style="left:95.5px;width:100px">49015B</div><div class="c" style="left:170.9px;width:120px">49015-6118</div><div class="c" style="left:261.3px;width:240px">COVER-CRANKCASE</div><div class="c" style="left:490.5px;width:60px">1</div></div>
<div class="row" style="top:570.82px;height:21.02px;background:#fff;box-shadow:-1px 0 0 #fff"><svg class="a" style="left:85.1px;top:1.0px" width="18" height="19" viewBox="0 0 18 19"><rect x="0.9" y="1.6" width="15.4" height="16.2" rx="1.4" fill="#f6f6f6" stroke="#777" stroke-width="1"/><path d="M16.6 2.6 V17.2 Q16.6 18.3 15.5 18.3 H1.8" stroke="#1a1a1a" stroke-width="1.4" fill="none"/><path d="M1.8 1.9 H16" stroke="#333" stroke-width="2.2" stroke-dasharray="1 1.4"/><path d="M1.6 3.4 H16.2" stroke="#666" stroke-width="0.7"/><path d="M3.2 6.3 H7.4 M8.6 6.3 H10.2 M3.2 8.6 H9.4 M5.6 10.8 H12.6 M3.6 13.3 H6.2 M9.6 13.3 H12.4" stroke="#444" stroke-width="1.1"/><path d="M3 10.8 L6.2 13.9 L14.6 5" stroke="#1414ff" stroke-width="2.5" fill="none"/></svg><div class="c" style="left:95.5px;width:100px">49015C</div><div class="c" style="left:170.9px;width:120px">49015-6142</div><div class="c" style="left:261.3px;width:240px">COVER-CRANKCASE</div><div class="c" style="left:490.5px;width:60px">1</div></div>
<div class="row" style="top:591.54px;height:21.02px;background:#e6e3df;box-shadow:-1px 0 0 #e6e3df"><svg class="a" style="left:85.1px;top:1.0px" width="18" height="19" viewBox="0 0 18 19"><rect x="0.9" y="1.6" width="15.4" height="16.2" rx="1.4" fill="#f6f6f6" stroke="#777" stroke-width="1"/><path d="M16.6 2.6 V17.2 Q16.6 18.3 15.5 18.3 H1.8" stroke="#1a1a1a" stroke-width="1.4" fill="none"/><path d="M1.8 1.9 H16" stroke="#333" stroke-width="2.2" stroke-dasharray="1 1.4"/><path d="M1.6 3.4 H16.2" stroke="#666" stroke-width="0.7"/><path d="M3.2 6.3 H7.4 M8.6 6.3 H10.2 M3.2 8.6 H9.4 M5.6 10.8 H12.6 M3.6 13.3 H6.2 M9.6 13.3 H12.4" stroke="#444" stroke-width="1.1"/><path d="M3 10.8 L6.2 13.9 L14.6 5" stroke="#1414ff" stroke-width="2.5" fill="none"/></svg><div class="c" style="left:95.5px;width:100px">49120</div><div class="c" style="left:170.9px;width:120px">49120-2241</div><div class="c" style="left:261.3px;width:240px">CRANKCASE-COMP</div><div class="c" style="left:490.5px;width:60px">1</div></div>
<div class="row" style="top:612.26px;height:21.02px;background:#fff;box-shadow:-1px 0 0 #fff"><svg class="a" style="left:23.2px;top:1.4px" width="20" height="20" viewBox="0 0 20 20"><path d="M0.6 6.2 L5.9 0.8 L5.9 3.8 C12 3.8 18.6 7.5 18 16.3 Q17 17.4 16 16.6 C14.8 12 11.4 9 5.9 8.9 L5.9 11.6 Z" fill="#000"/></svg><svg class="a" style="left:85.1px;top:1.0px" width="18" height="19" viewBox="0 0 18 19"><rect x="0.9" y="1.6" width="15.4" height="16.2" rx="1.4" fill="#f6f6f6" stroke="#777" stroke-width="1"/><path d="M16.6 2.6 V17.2 Q16.6 18.3 15.5 18.3 H1.8" stroke="#1a1a1a" stroke-width="1.4" fill="none"/><path d="M1.8 1.9 H16" stroke="#333" stroke-width="2.2" stroke-dasharray="1 1.4"/><path d="M1.6 3.4 H16.2" stroke="#666" stroke-width="0.7"/><path d="M3.2 6.3 H7.4 M8.6 6.3 H10.2 M3.2 8.6 H9.4 M5.6 10.8 H12.6 M3.6 13.3 H6.2 M9.6 13.3 H12.4" stroke="#444" stroke-width="1.1"/><path d="M3 10.8 L6.2 13.9 L14.6 5" stroke="#1414ff" stroke-width="2.5" fill="none"/></svg><div class="c" style="left:95.5px;width:100px">92043</div><div class="c" style="left:170.9px;width:120px">92043-1037</div><div class="c" style="left:261.3px;width:240px">PIN,DOWEL,10X14</div><div class="c" style="left:490.5px;width:60px">2</div></div>
<div class="row" style="top:632.98px;height:21.02px;background:#6a9ed7;box-shadow:-1px 0 0 #6a9ed7"><svg class="a" style="left:85.1px;top:1.0px" width="18" height="19" viewBox="0 0 18 19"><rect x="0.9" y="1.6" width="15.4" height="16.2" rx="1.4" fill="#f6f6f6" stroke="#777" stroke-width="1"/><path d="M16.6 2.6 V17.2 Q16.6 18.3 15.5 18.3 H1.8" stroke="#1a1a1a" stroke-width="1.4" fill="none"/><path d="M1.8 1.9 H16" stroke="#333" stroke-width="2.2" stroke-dasharray="1 1.4"/><path d="M1.6 3.4 H16.2" stroke="#666" stroke-width="0.7"/><path d="M3.2 6.3 H7.4 M8.6 6.3 H10.2 M3.2 8.6 H9.4 M5.6 10.8 H12.6 M3.6 13.3 H6.2 M9.6 13.3 H12.4" stroke="#444" stroke-width="1.1"/><path d="M3 10.8 L6.2 13.9 L14.6 5" stroke="#1414ff" stroke-width="2.5" fill="none"/></svg><div class="c" style="left:95.5px;width:100px">92049</div><div class="c" style="left:170.9px;width:120px">92049-2001</div><div class="c" style="left:261.3px;width:240px">SEAL,OIL (ISRD 20357)</div><div class="c" style="left:490.5px;width:60px">2</div></div>
<div class="row" style="top:653.70px;height:21.02px;background:#fff;box-shadow:-1px 0 0 #fff"><svg class="a" style="left:85.1px;top:1.0px" width="18" height="19" viewBox="0 0 18 19"><rect x="0.9" y="1.6" width="15.4" height="16.2" rx="1.4" fill="#f6f6f6" stroke="#777" stroke-width="1"/><path d="M16.6 2.6 V17.2 Q16.6 18.3 15.5 18.3 H1.8" stroke="#1a1a1a" stroke-width="1.4" fill="none"/><path d="M1.8 1.9 H16" stroke="#333" stroke-width="2.2" stroke-dasharray="1 1.4"/><path d="M1.6 3.4 H16.2" stroke="#666" stroke-width="0.7"/><path d="M3.2 6.3 H7.4 M8.6 6.3 H10.2 M3.2 8.6 H9.4 M5.6 10.8 H12.6 M3.6 13.3 H6.2 M9.6 13.3 H12.4" stroke="#444" stroke-width="1.1"/><path d="M3 10.8 L6.2 13.9 L14.6 5" stroke="#1414ff" stroke-width="2.5" fill="none"/></svg><div class="c" style="left:95.5px;width:100px">92150</div><div class="c" style="left:170.9px;width:120px">92150-2261</div><div class="c" style="left:261.3px;width:240px">BOLT</div><div class="c" style="left:490.5px;width:60px">1</div></div>
<div class="row" style="top:674.42px;height:21.02px;background:#e6e3df;box-shadow:-1px 0 0 #e6e3df"><svg class="a" style="left:23.2px;top:1.4px" width="20" height="20" viewBox="0 0 20 20"><path d="M0.6 6.2 L5.9 0.8 L5.9 3.8 C12 3.8 18.6 7.5 18 16.3 Q17 17.4 16 16.6 C14.8 12 11.4 9 5.9 8.9 L5.9 11.6 Z" fill="#000"/></svg><svg class="a" style="left:85.1px;top:1.0px" width="18" height="19" viewBox="0 0 18 19"><rect x="0.9" y="1.6" width="15.4" height="16.2" rx="1.4" fill="#f6f6f6" stroke="#777" stroke-width="1"/><path d="M16.6 2.6 V17.2 Q16.6 18.3 15.5 18.3 H1.8" stroke="#1a1a1a" stroke-width="1.4" fill="none"/><path d="M1.8 1.9 H16" stroke="#333" stroke-width="2.2" stroke-dasharray="1 1.4"/><path d="M1.6 3.4 H16.2" stroke="#666" stroke-width="0.7"/><path d="M3.2 6.3 H7.4 M8.6 6.3 H10.2 M3.2 8.6 H9.4 M5.6 10.8 H12.6 M3.6 13.3 H6.2 M9.6 13.3 H12.4" stroke="#444" stroke-width="1.1"/><path d="M3 10.8 L6.2 13.9 L14.6 5" stroke="#1414ff" stroke-width="2.5" fill="none"/></svg><div class="c" style="left:95.5px;width:100px">130</div><div class="c" style="left:170.9px;width:120px">130C0612</div><div class="c" style="left:261.3px;width:240px">BOLT-FLANGED</div><div class="c" style="left:490.5px;width:60px">0</div><div class="c" style="left:587.5px;text-align:left">Substitute part, supplied until the stock is exhausted.</div></div>
<div class="row" style="top:695.14px;height:21.02px;background:#fff;box-shadow:-1px 0 0 #fff"><svg class="a" style="left:85.1px;top:1.0px" width="18" height="19" viewBox="0 0 18 19"><rect x="0.9" y="1.6" width="15.4" height="16.2" rx="1.4" fill="#f6f6f6" stroke="#777" stroke-width="1"/><path d="M16.6 2.6 V17.2 Q16.6 18.3 15.5 18.3 H1.8" stroke="#1a1a1a" stroke-width="1.4" fill="none"/><path d="M1.8 1.9 H16" stroke="#333" stroke-width="2.2" stroke-dasharray="1 1.4"/><path d="M1.6 3.4 H16.2" stroke="#666" stroke-width="0.7"/><path d="M3.2 6.3 H7.4 M8.6 6.3 H10.2 M3.2 8.6 H9.4 M5.6 10.8 H12.6 M3.6 13.3 H6.2 M9.6 13.3 H12.4" stroke="#444" stroke-width="1.1"/><path d="M3 10.8 L6.2 13.9 L14.6 5" stroke="#1414ff" stroke-width="2.5" fill="none"/></svg><div class="c" style="left:95.5px;width:100px">130A</div><div class="c" style="left:170.9px;width:120px">130G0630</div><div class="c" style="left:261.3px;width:240px">BOLT-FLANGED,6X30</div><div class="c" style="left:490.5px;width:60px">7</div></div>
<div class="row" style="top:715.86px;height:21.02px;background:#e6e3df;box-shadow:-1px 0 0 #e6e3df"><svg class="a" style="left:23.2px;top:1.4px" width="20" height="20" viewBox="0 0 20 20"><path d="M0.6 6.2 L5.9 0.8 L5.9 3.8 C12 3.8 18.6 7.5 18 16.3 Q17 17.4 16 16.6 C14.8 12 11.4 9 5.9 8.9 L5.9 11.6 Z" fill="#000"/></svg><svg class="a" style="left:85.1px;top:1.0px" width="18" height="19" viewBox="0 0 18 19"><rect x="0.9" y="1.6" width="15.4" height="16.2" rx="1.4" fill="#f6f6f6" stroke="#777" stroke-width="1"/><path d="M16.6 2.6 V17.2 Q16.6 18.3 15.5 18.3 H1.8" stroke="#1a1a1a" stroke-width="1.4" fill="none"/><path d="M1.8 1.9 H16" stroke="#333" stroke-width="2.2" stroke-dasharray="1 1.4"/><path d="M1.6 3.4 H16.2" stroke="#666" stroke-width="0.7"/><path d="M3.2 6.3 H7.4 M8.6 6.3 H10.2 M3.2 8.6 H9.4 M5.6 10.8 H12.6 M3.6 13.3 H6.2 M9.6 13.3 H12.4" stroke="#444" stroke-width="1.1"/><path d="M3 10.8 L6.2 13.9 L14.6 5" stroke="#1414ff" stroke-width="2.5" fill="none"/></svg><div class="c" style="left:95.5px;width:100px">130B</div><div class="c" style="left:170.9px;width:120px">130T0845</div><div class="c" style="left:261.3px;width:240px">BOLT-FLANGED,8X45</div><div class="c" style="left:490.5px;width:60px">4</div></div>
<div id="tsb" class="a"><div class="a" style="left:1.5px;top:50.3px;width:4.5px;height:123.4px;background:#c1c1c1"></div></div>
<div class="a" style="left:1025.5px;top:186.9px;width:4.5px;height:240.1px;background:#c1c1c1"></div>
</div>
<svg class="a" style="left:0;top:0" width="1600" height="738" viewBox="0 0 1600 738"><defs><clipPath id="cl"><rect x="571" y="75" width="1023" height="444"/></clipPath></defs><g clip-path="url(#cl)"><g fill="#f3f3f3">
<path d="M1027.5 222.9 L1030.5 222.9 L1072.8 295 L1053.5 295 L1047.5 285.9 L1011 285.9 L1006 295 L986.6 295 Z M1029 252.5 L1018.3 269.2 L1038.3 269.2 Z" fill-rule="evenodd"/>
<path d="M1079 225.4 L1120 225.4 C1150 225.4 1162 240 1162 256 C1162 268 1154 276 1142 280 L1168 295 L1146 295 L1122 283 L1096.2 283 L1096.2 295 L1079 295 Z M1096.2 242.4 L1096.2 267 L1124 267 C1136 267 1142 262 1142 254 C1142 246 1137 242.4 1125 242.4 Z" fill-rule="evenodd"/>
</g>
<g font-family="Liberation Sans" font-weight="bold" font-size="9.7" fill="#2a2a2a" text-anchor="middle">
<text x="1103.40 1109.55 1115.70 1121.85 1128.00" y="76.0">14083</text>
<text x="1227.20 1233.35 1239.50 1245.65 1251.80 1257.95 1264.10" y="83.0">187/A&#126;D</text>
<text x="1002.40 1008.55 1014.70 1020.85 1027.00" y="103.4">11008</text>
<text x="1142.20 1148.35 1154.50 1160.65 1166.80 1172.95 1179.10 1185.25" y="182.2">11060A&#126;C</text>
<text x="1157.30 1163.45 1169.60 1175.75 1181.90" y="196.5">49120</text>
<text x="1248.80 1254.95 1261.10 1267.25 1273.40" y="197.0">92049</text>
<text x="1077.20 1083.35 1089.50 1095.65 1101.80 1107.95 1114.10 1120.25" y="207.5">11060A&#126;C</text>
<text x="994.70 1000.85 1007.00 1013.15 1019.30" y="238.1">11004</text>
<text x="937.50 943.65 949.80 955.95 962.10" y="284.4">92150</text>
<text x="1074.20 1080.35 1086.50" y="301.9">601</text>
<text x="996.40 1002.55 1008.70 1014.85 1021.00" y="308.7">11060</text>
<text x="1050.10 1056.25 1062.40" y="315.7">601</text>
<text x="1256.10 1262.25 1268.40 1274.55 1280.70" y="312.4">92043</text>
<text x="1109.10 1115.25 1121.40" y="422.4">551</text>
<text x="935.70 941.85 948.00 954.15 960.30" y="463.9">92049</text>
<text x="1015.00 1021.15 1027.30 1033.45 1039.60 1045.75 1051.90 1058.05 1064.20" y="500.7">49015/A&#126;E</text>
<text x="975.50 981.65 987.80 993.95" y="505.1">130A</text>
</g>
<path d="M1116 76 L1116 103.5" stroke="#2e2e2e" stroke-width="1.12" fill="none" stroke-linejoin="round" stroke-linecap="round" />
<path d="M1246 86 L1246 107" stroke="#2e2e2e" stroke-width="1.12" fill="none" stroke-linejoin="round" stroke-linecap="round" />
<path d="M1014 106 L1014 127" stroke="#2e2e2e" stroke-width="1.12" fill="none" stroke-linejoin="round" stroke-linecap="round" />
<path d="M1164 148 L1164 172" stroke="#2e2e2e" stroke-width="1.12" fill="none" stroke-linejoin="round" stroke-linecap="round" />
<path d="M1169.3 200 L1169.3 222" stroke="#2e2e2e" stroke-width="1.12" fill="none" stroke-linejoin="round" stroke-linecap="round" />
<path d="M1260.7 200 L1260.7 223.5" stroke="#2e2e2e" stroke-width="1.12" fill="none" stroke-linejoin="round" stroke-linecap="round" />
<path d="M1099.2 173 L1099.2 197" stroke="#2e2e2e" stroke-width="1.12" fill="none" stroke-linejoin="round" stroke-linecap="round" />
<path d="M1007.2 206.5 L1007.2 228.5" stroke="#2e2e2e" stroke-width="1.12" fill="none" stroke-linejoin="round" stroke-linecap="round" />
<path d="M949.4 287 L949.4 311" stroke="#2e2e2e" stroke-width="1.12" fill="none" stroke-linejoin="round" stroke-linecap="round" />
<path d="M1080.3 305 L1080.3 328" stroke="#2e2e2e" stroke-width="1.12" fill="none" stroke-linejoin="round" stroke-linecap="round" />
<path d="M1009.2 312 L1009.2 333" stroke="#2e2e2e" stroke-width="1.12" fill="none" stroke-linejoin="round" stroke-linecap="round" />
<path d="M1056.1 319 L1056.1 341" stroke="#2e2e2e" stroke-width="1.12" fill="none" stroke-linejoin="round" stroke-linecap="round" />
<path d="M1268 281 L1268 302.8" stroke="#2e2e2e" stroke-width="1.12" fill="none" stroke-linejoin="round" stroke-linecap="round" />
<path d="M1114.8 393 L1114.8 410" stroke="#2e2e2e" stroke-width="1.12" fill="none" stroke-linejoin="round" stroke-linecap="round" />
<path d="M948 432 L948 453.5" stroke="#2e2e2e" stroke-width="1.12" fill="none" stroke-linejoin="round" stroke-linecap="round" />
<path d="M1039 468 L1039 490" stroke="#2e2e2e" stroke-width="1.12" fill="none" stroke-linejoin="round" stroke-linecap="round" />
<path d="M984.4 477 L984.4 493" stroke="#2e2e2e" stroke-width="1.12" fill="none" stroke-linejoin="round" stroke-linecap="round" />
<path d="M1041.4 74 L1064.4 121 L1050.6 126.8" stroke="#2e2e2e" stroke-width="1.12" fill="none" stroke-linejoin="round" stroke-linecap="round" />
<path d="M1234.3 116.7 L1181.5 138" stroke="#2e2e2e" stroke-width="1.12" fill="none" stroke-linejoin="round" stroke-linecap="round" />
<path d="M1157 147.2 L1118.5 161.5" stroke="#2e2e2e" stroke-width="1.12" fill="none" stroke-linejoin="round" stroke-linecap="round" />
<path d="M1081.5 175.1 L1092.4 172.4" stroke="#2e2e2e" stroke-width="1.12" fill="none" stroke-linejoin="round" stroke-linecap="round" />
<path d="M1226.3 257 L1256.8 240.8" stroke="#2e2e2e" stroke-width="1.12" fill="none" stroke-linejoin="round" stroke-linecap="round" />
<path d="M1235.5 289.6 L1255.8 280.4" stroke="#2e2e2e" stroke-width="1.12" fill="none" stroke-linejoin="round" stroke-linecap="round" />
<path d="M1095.3 333.7 L1143.6 304.9" stroke="#2e2e2e" stroke-width="1.12" fill="none" stroke-linejoin="round" stroke-linecap="round" />
<path d="M1120.6 382 L1173.5 356.7" stroke="#2e2e2e" stroke-width="1.12" fill="none" stroke-linejoin="round" stroke-linecap="round" />
<path d="M975.1 302.2 L985 296.4 L985.3 375" stroke="#2e2e2e" stroke-width="1.12" fill="none" stroke-linejoin="round" stroke-linecap="round" />
<path d="M957.3 411.4 L994.7 393.4" stroke="#2e2e2e" stroke-width="1.12" fill="none" stroke-linejoin="round" stroke-linecap="round" />
<path d="M1005 455.2 L1048.8 430.7" stroke="#2e2e2e" stroke-width="1.12" fill="none" stroke-linejoin="round" stroke-linecap="round" />
<path d="M991.5 148.5 L984 152 Q980.8 153.8 981.6 157.2 L995 187 L999.1 202 Q1001 205.5 1005.8 204.7 L1017.4 203.4" stroke="#2e2e2e" stroke-width="1.12" fill="none" stroke-linejoin="round" stroke-linecap="round" />
<circle cx="986.5" cy="158.1" r="2.1" stroke="#2e2e2e" stroke-width="1.01" fill="none"/>
<circle cx="1002.8" cy="198.1" r="2.1" stroke="#2e2e2e" stroke-width="1.01" fill="none"/>
<path d="M993.3 157.5 Q995 168 996.4 173.6 Q999 180 1005.2 184.4" stroke="#2e2e2e" stroke-width="1.01" fill="none" stroke-linejoin="round" stroke-linecap="round" />
<path d="M1009 205.5 Q1013 205 1017.4 203.4" stroke="#2e2e2e" stroke-width="0.9" fill="none" stroke-linejoin="round" stroke-linecap="round" />
<path d="M994.9 147.5 C995 141 996 139 1002.2 136.1 L1032.3 121.5 Q1038.8 119.6 1046.9 123.1" stroke="#2e2e2e" stroke-width="1.12" fill="none" stroke-linejoin="round" stroke-linecap="round" />
<path d="M997.3 150 C997.5 143 998.5 141 1000.6 139.4 L1031.5 123.9" stroke="#2e2e2e" stroke-width="1.01" fill="none" stroke-linejoin="round" stroke-linecap="round" />
<path d="M1002 137.5 L1031 123.5" stroke="#8a8a8a" stroke-width="2.46" fill="none" stroke-linejoin="round" stroke-linecap="round" stroke-dasharray="0.7 0.9"/>
<path d="M998.9 153.2 C999 146 1001 143 1006.3 138.6 L1035.5 125.6 Q1038 124.5 1040.4 124.8" stroke="#2e2e2e" stroke-width="1.01" fill="none" stroke-linejoin="round" stroke-linecap="round" />
<path d="M994.9 147.5 L994.9 158.1 Q995.5 162 998.1 163.8 L1008.7 167" stroke="#2e2e2e" stroke-width="1.12" fill="none" stroke-linejoin="round" stroke-linecap="round" />
<path d="M997.3 150 L998.1 158.9 Q999 162 1002.2 163 L1009.5 164.6" stroke="#2e2e2e" stroke-width="1.01" fill="none" stroke-linejoin="round" stroke-linecap="round" />
<path d="M998.9 153.2 L1002.2 157.3 L1008.7 160.5" stroke="#2e2e2e" stroke-width="1.01" fill="none" stroke-linejoin="round" stroke-linecap="round" />
<path d="M1008.7 162 Q1009 156.5 1015 156.5 Q1023.5 156.5 1024.1 163 Q1024.5 171.5 1016 171.9 Q1008.5 171.5 1008.7 162 Z" stroke="#2e2e2e" stroke-width="1.12" fill="none" stroke-linejoin="round" stroke-linecap="round" />
<path d="M1018.5 160.5 Q1014 159 1013.5 164 Q1014 168 1018.5 167" stroke="#2e2e2e" stroke-width="1.01" fill="none" stroke-linejoin="round" stroke-linecap="round" />
<circle cx="1010.8" cy="169.2" r="1.5" stroke="#2e2e2e" stroke-width="0.9" fill="none"/>
<path d="M1010.3 148 Q1010 142.6 1014 142.6 Q1017 143 1016 147.5 L1020.9 151.6 L1036.3 147.5" stroke="#2e2e2e" stroke-width="1.01" fill="none" stroke-linejoin="round" stroke-linecap="round" />
<path d="M1025.8 141 Q1025 137 1029 137 Q1032 137.5 1032 141 Q1035 137.5 1038 138.5 Q1041 140 1040.4 143" stroke="#2e2e2e" stroke-width="1.01" fill="none" stroke-linejoin="round" stroke-linecap="round" />
<path d="M1017 147 Q1019 144 1023 145 L1026 141" stroke="#2e2e2e" stroke-width="0.9" fill="none" stroke-linejoin="round" stroke-linecap="round" />
<path d="M1040.4 126.4 Q1041 122 1045 122.5 Q1049 123.5 1048.5 128 L1048.5 139.4" stroke="#2e2e2e" stroke-width="1.01" fill="none" stroke-linejoin="round" stroke-linecap="round" />
<path d="M1046.5 129 Q1043 128.5 1043.5 131.5 Q1044.5 133.5 1046.5 132.5" stroke="#2e2e2e" stroke-width="0.9" fill="none" stroke-linejoin="round" stroke-linecap="round" />
<path d="M1051 127 L1054.5 131 M1050.6 126.8 L1056 130" stroke="#2e2e2e" stroke-width="0.9" fill="none" stroke-linejoin="round" stroke-linecap="round" />
<path d="M1008.5 173.6 Q1012 172 1013 176 L1012 180 Q1010 183 1012 186 L1014.6 189.8" stroke="#2e2e2e" stroke-width="1.01" fill="none" stroke-linejoin="round" stroke-linecap="round" />
<path d="M1015 174 Q1019 175 1018 179 L1017 183 Q1018 186 1020.7 189.8" stroke="#2e2e2e" stroke-width="1.01" fill="none" stroke-linejoin="round" stroke-linecap="round" />
<circle cx="1011.3" cy="187.1" r="1.7" stroke="#2e2e2e" stroke-width="0.9" fill="none"/>
<path d="M1014.6 189.8 Q1016 196 1018 197.9 Q1021 202 1025.5 204 L1033 203.4 L1065 191.2" stroke="#2e2e2e" stroke-width="1.12" fill="none" stroke-linejoin="round" stroke-linecap="round" />
<path d="M1016 188.5 Q1018 195 1020.7 197.9 Q1024 202 1027.5 202.7" stroke="#2e2e2e" stroke-width="1.01" fill="none" stroke-linejoin="round" stroke-linecap="round" />
<path d="M1017.4 187.1 Q1020 194 1023.5 197.3 Q1027 200.5 1030.2 200.7 L1042.4 196.6" stroke="#2e2e2e" stroke-width="1.01" fill="none" stroke-linejoin="round" stroke-linecap="round" />
<path d="M1024 181 Q1024 174 1031 174 Q1037 176 1036 182 M1034 191 Q1027 193 1025 187" stroke="#2e2e2e" stroke-width="1.01" fill="none" stroke-linejoin="round" stroke-linecap="round" />
<path d="M1033.5 185.5 Q1030 185 1030.5 188 Q1031 190.5 1034 189.5" stroke="#2e2e2e" stroke-width="0.9" fill="none" stroke-linejoin="round" stroke-linecap="round" />
<path d="M1035.7 182.4 Q1039 186 1037 190 L1038.5 196 M1038.5 181.5 Q1042 185 1040 189 L1041.5 195.5 M1041.5 181 Q1045 184.5 1043 188.5 L1044.5 195" stroke="#2e2e2e" stroke-width="0.95" fill="none" stroke-linejoin="round" stroke-linecap="round" />
<path d="M1030.2 166.1 L1034.5 164.5 L1042.4 177.6 L1038.5 179.5 Z M1033 170 L1040 175" stroke="#2e2e2e" stroke-width="0.95" fill="none" stroke-linejoin="round" stroke-linecap="round" />
<path d="M1021 171.5 Q1026 170 1027 165" stroke="#2e2e2e" stroke-width="0.9" fill="none" stroke-linejoin="round" stroke-linecap="round" />
<path d="M1038.1 141.2 L1062.5 135.1 Q1067 134 1069.3 139.2 L1087 169.7 Q1088.5 174 1084.2 175 L1053 188.6 Q1049.5 190 1048.5 186 L1037.5 151 Q1036 144 1038.1 141.2 Z" stroke="#2e2e2e" stroke-width="1.12" fill="none" stroke-linejoin="round" stroke-linecap="round" />
<path d="M1042 145 L1061 140 Q1064 139.5 1065.5 142 L1081.5 168 Q1082.5 170.5 1080 171.5 L1055 183.5 Q1053 184.5 1052 182 L1041.8 151 Z" stroke="#2e2e2e" stroke-width="1.01" fill="none" stroke-linejoin="round" stroke-linecap="round" />
<path d="M1039 133 Q1040 125 1046 125.5 Q1052 127 1051 133 L1052 137" stroke="#2e2e2e" stroke-width="1.01" fill="none" stroke-linejoin="round" stroke-linecap="round" />
<circle cx="1045" cy="130.8" r="2.6" stroke="#2e2e2e" stroke-width="1.01" fill="none"/>
<path d="M1052 127 L1054.5 131 M1050.6 126.8 L1056 130" stroke="#2e2e2e" stroke-width="0.9" fill="none" stroke-linejoin="round" stroke-linecap="round" />
<circle cx="1084.9" cy="169.7" r="2.2" stroke="#2e2e2e" stroke-width="1.01" fill="none"/>
<circle cx="1053" cy="153" r="3.6" stroke="#2e2e2e" stroke-width="1.01" fill="none"/>
<circle cx="1058.5" cy="146.5" r="3.8" stroke="#2e2e2e" stroke-width="1.01" fill="none"/>
<circle cx="1064" cy="154" r="2.5" stroke="#2e2e2e" stroke-width="1.01" fill="none"/>
<path d="M1046 160 L1054 158 L1056 163 L1048 165 Z M1058 160 L1063 158 L1066 163 M1066 157 L1071 162 L1072 170 L1062 175 L1059 168" stroke="#2e2e2e" stroke-width="1.01" fill="none" stroke-linejoin="round" stroke-linecap="round" />
<path d="M1048 168 Q1052 166 1056 170 L1060 178" stroke="#2e2e2e" stroke-width="0.9" fill="none" stroke-linejoin="round" stroke-linecap="round" />
<path d="M1078.5 125.5 Q1078 119 1084 118.5 L1097 114.5" stroke="#2e2e2e" stroke-width="1.12" fill="none" stroke-linejoin="round" stroke-linecap="round" />
<path d="M1078.5 125.5 L1093.5 166.5 Q1096 173 1101.5 172 L1114.5 166.5" stroke="#2e2e2e" stroke-width="1.12" fill="none" stroke-linejoin="round" stroke-linecap="round" />
<path d="M1082.5 128.5 L1096.5 163 Q1099 166 1102 165 L1112 161" stroke="#2e2e2e" stroke-width="1.01" fill="none" stroke-linejoin="round" stroke-linecap="round" />
<path d="M1085 123.5 L1098 119.5" stroke="#2e2e2e" stroke-width="1.01" fill="none" stroke-linejoin="round" stroke-linecap="round" />
<circle cx="1082.2" cy="122.9" r="2.1" stroke="#2e2e2e" stroke-width="1.01" fill="none"/>
<circle cx="1098.5" cy="169.5" r="2.1" stroke="#2e2e2e" stroke-width="1.01" fill="none"/>
<path d="M1097.2 118.5 Q1095.5 112 1100 111.5 Q1104 111.6 1105 114.5 L1112.5 111.8 Q1112.5 103 1117 102.5 Q1121 102.5 1121.5 107 L1123 109 L1136 117.5 L1141 121.5" stroke="#2e2e2e" stroke-width="1.12" fill="none" stroke-linejoin="round" stroke-linecap="round" />
<path d="M1097.2 118.5 L1111.8 162.1 Q1113 168.5 1117 168 Q1120.5 167 1120 163 L1141.5 151.5 Q1145 152 1148 149.5 Q1150 145 1146.5 142 L1144.4 138.7 L1141 121.5" stroke="#2e2e2e" stroke-width="1.12" fill="none" stroke-linejoin="round" stroke-linecap="round" />
<path d="M1101.2 120 L1114.8 159 M1106 113.5 L1114.5 110.8 M1121 111 L1137 120" stroke="#2e2e2e" stroke-width="0.9" fill="none" stroke-linejoin="round" stroke-linecap="round" />
<circle cx="1099.4" cy="115.2" r="2.0" stroke="#2e2e2e" stroke-width="1.01" fill="none"/>
<circle cx="1116.9" cy="105.7" r="2.0" stroke="#2e2e2e" stroke-width="1.01" fill="none"/>
<circle cx="1115.6" cy="164.1" r="2.0" stroke="#2e2e2e" stroke-width="1.01" fill="none"/>
<circle cx="1145.2" cy="146.4" r="2.2" stroke="#2e2e2e" stroke-width="1.01" fill="none"/>
<path d="M1111.3 122.4 L1123.5 118.4 L1126.6 123.5 L1118.5 128.5 Z" stroke="#2e2e2e" stroke-width="1.01" fill="none" stroke-linejoin="round" stroke-linecap="round" />
<path d="M1113 121.5 L1109 124 L1117 131 L1128 125.5 L1126.6 123.5" stroke="#2e2e2e" stroke-width="0.9" fill="none" stroke-linejoin="round" stroke-linecap="round" />
<path d="M1117.4 132.6 L1140.8 121.9 M1117.4 132.6 L1120.5 155 M1119 141 L1142 131" stroke="#2e2e2e" stroke-width="1.01" fill="none" stroke-linejoin="round" stroke-linecap="round" />
<path d="M1105.2 128.5 L1118.5 149.9 M1109 127 L1121 139" stroke="#2e2e2e" stroke-width="0.9" fill="none" stroke-linejoin="round" stroke-linecap="round" />
<path d="M1120.5 155 L1128.6 150 L1132.7 142.8 L1137.8 142.3 L1137.8 147.8" stroke="#2e2e2e" stroke-width="1.01" fill="none" stroke-linejoin="round" stroke-linecap="round" />
<path d="M1114.4 159 L1156 147.8" stroke="#2e2e2e" stroke-width="1.01" fill="none" stroke-linejoin="round" stroke-linecap="round" />
<path d="M1120 121 L1115 117 L1124 113 L1131 117" stroke="#2e2e2e" stroke-width="0.9" fill="none" stroke-linejoin="round" stroke-linecap="round" />
<path d="M1143 101 Q1142.5 94 1148 94 Q1152 94 1153 97.5 L1162 93.5" stroke="#2e2e2e" stroke-width="1.12" fill="none" stroke-linejoin="round" stroke-linecap="round" />
<path d="M1143 101 L1159.5 142 Q1161.5 148.5 1166 147.5 Q1169.5 146 1169 142 L1176 138.5" stroke="#2e2e2e" stroke-width="1.12" fill="none" stroke-linejoin="round" stroke-linecap="round" />
<path d="M1147 103 L1162 140 M1153.5 101 L1162.5 97" stroke="#2e2e2e" stroke-width="1.01" fill="none" stroke-linejoin="round" stroke-linecap="round" />
<circle cx="1147.8" cy="98.2" r="2.0" stroke="#2e2e2e" stroke-width="1.01" fill="none"/>
<circle cx="1164.3" cy="143.8" r="2.1" stroke="#2e2e2e" stroke-width="1.01" fill="none"/>
<path d="M1161 96 Q1159.5 89 1164 87.5 Q1168.5 87 1170 91 L1178 87 Q1177.5 78.5 1182.5 77.5 Q1187.5 77.5 1188 82.5 L1205.4 83.6 Q1210 85 1212 89 L1217.5 105.8 Q1219.5 112 1217 118 Q1219.5 123.5 1214 124.5 Q1209.5 125 1208 121.5 L1189 133 Q1189 140 1183 140.5 Q1177.5 140.5 1176.5 135.5 L1161 96 Z" stroke="#2e2e2e" stroke-width="1.12" fill="none" stroke-linejoin="round" stroke-linecap="round" />
<path d="M1165.5 96 L1179.5 133.5 M1168.5 92.5 L1177 89" stroke="#2e2e2e" stroke-width="1.01" fill="none" stroke-linejoin="round" stroke-linecap="round" />
<path d="M1173.7 94.2 Q1176 99 1178.5 102.9 L1188.1 122.1 L1190 128" stroke="#2e2e2e" stroke-width="1.01" fill="none" stroke-linejoin="round" stroke-linecap="round" />
<path d="M1186 83.5 Q1176 88 1173.7 94.2" stroke="#2e2e2e" stroke-width="1.01" fill="none" stroke-linejoin="round" stroke-linecap="round" />
<circle cx="1165" cy="91.6" r="1.9" stroke="#2e2e2e" stroke-width="1.01" fill="none"/>
<circle cx="1183.3" cy="81.2" r="1.9" stroke="#2e2e2e" stroke-width="1.01" fill="none"/>
<circle cx="1213.1" cy="120.6" r="2.1" stroke="#2e2e2e" stroke-width="1.01" fill="none"/>
<circle cx="1182.4" cy="136.6" r="2.1" stroke="#2e2e2e" stroke-width="1.01" fill="none"/>
<path d="M1184.3 97.1 L1202.6 88.4 M1194.9 118.3 L1207.4 112.5 M1210.5 110.5 L1214.5 108.5" stroke="#2e2e2e" stroke-width="1.01" fill="none" stroke-linejoin="round" stroke-linecap="round" />
<path d="M1183 134 L1213 119.5 M1184.5 137.5 L1215 123" stroke="#2e2e2e" stroke-width="0.9" fill="none" stroke-linejoin="round" stroke-linecap="round" />
<g transform="rotate(-26 1197.5 104)"><text x="1184.5" y="108.8" font-family="Liberation Sans" font-weight="bold" font-size="12.5" fill="#f4f4f4" stroke="#2a2a2a" stroke-width="1.05" letter-spacing="-0.6">OHV</text></g>
<path d="M1238.5 112 L1249 108.5 Q1252.5 109.5 1252 113 L1243 117 Q1239 117 1238.5 112 Z" stroke="#2e2e2e" stroke-width="1.01" fill="none" stroke-linejoin="round" stroke-linecap="round" />
<path d="M1241 110.5 L1243.5 116 M1244 109.5 L1246.5 115.5" stroke="#2e2e2e" stroke-width="0.78" fill="none" stroke-linejoin="round" stroke-linecap="round" />
<path d="M1108 264 Q1111 261 1114 264 L1135.8 280.4 L1143.9 287.5 L1160.2 314 L1174.4 332.2 L1180.5 356.6 L1178.5 385.1 Q1177 390 1172 389 L1141 371.5 Q1138 373 1135 370 L1106 356 Q1101.5 354.5 1102 350 L1097 309 Q1093 307 1094 303 L1093.5 293 Q1090.5 290 1093 286.5 L1104 268 Z" stroke="#2e2e2e" stroke-width="1.12" fill="none" stroke-linejoin="round" stroke-linecap="round" />
<path d="M1112 270 L1134 284 L1141 290.5 L1157 316 L1171 334 L1176.5 357 L1175 381 L1141 366 L1108 350.5 L1103 312 L1099 292 L1108 273 Z" stroke="#2e2e2e" stroke-width="1.01" fill="none" stroke-linejoin="round" stroke-linecap="round" />
<circle cx="1111.4" cy="265.6" r="1.8" stroke="#2e2e2e" stroke-width="0.9" fill="none"/>
<circle cx="1095.5" cy="291.5" r="1.8" stroke="#2e2e2e" stroke-width="0.9" fill="none"/>
<circle cx="1096.5" cy="305.5" r="1.8" stroke="#2e2e2e" stroke-width="0.9" fill="none"/>
<circle cx="1137.8" cy="368.8" r="1.8" stroke="#2e2e2e" stroke-width="0.9" fill="none"/>
<path d="M1097.2 336.3 L1103 334.5 M1099.5 354 L1104 352" stroke="#2e2e2e" stroke-width="1.01" fill="none" stroke-linejoin="round" stroke-linecap="round" />
<circle cx="1102.3" cy="340" r="2.2" stroke="#2e2e2e" stroke-width="0.9" fill="none"/>
<path d="M1097.2 336.3 L1099.2 350.5 L1099.5 354 L1172 392.5 Q1176 396.5 1181.8 396.9 L1185.6 396.9 L1226.4 373.2 L1226.4 359 Q1224 355 1216 353.3 L1216.9 348.5 Q1224 344 1228.2 330 L1229.7 312.8" stroke="#2e2e2e" stroke-width="1.12" fill="none" stroke-linejoin="round" stroke-linecap="round" />
<path d="M1173.3 381.7 L1174.2 394.1 M1173.3 381.7 Q1177 386 1183.7 386.5 L1226.4 361.8 M1186.5 387 L1186.5 396" stroke="#2e2e2e" stroke-width="1.01" fill="none" stroke-linejoin="round" stroke-linecap="round" />
<path d="M1172.3 359 L1171.4 382.7 M1175.2 359 L1175 382" stroke="#2e2e2e" stroke-width="1.01" fill="none" stroke-linejoin="round" stroke-linecap="round" />
<path d="M1176.1 376 L1214 355.2" stroke="#2e2e2e" stroke-width="1.01" fill="none" stroke-linejoin="round" stroke-linecap="round" />
<ellipse cx="1202.7" cy="380.8" rx="4.3" ry="5.2" transform="rotate(-20 1202.7 380.8)" stroke="#2e2e2e" stroke-width="1.12" fill="none"/>
<ellipse cx="1202.3" cy="381.2" rx="2.6" ry="3.4" transform="rotate(-20 1202.3 381.2)" stroke="#2e2e2e" stroke-width="0.9" fill="none"/>
<path d="M1190.4 367.5 L1203 373.5 M1189.5 371.3 L1199.8 376.5" stroke="#2e2e2e" stroke-width="0.95" fill="none" stroke-linejoin="round" stroke-linecap="round" />
<circle cx="1219.3" cy="374.2" r="2.6" stroke="#2e2e2e" stroke-width="0.95" fill="none"/>
<path d="M1221.6 358.8 A2.4 2.4 0 1 0 1221.6 362.2 M1183.6 380.6 A2.4 2.4 0 1 0 1183.6 384" stroke="#2e2e2e" stroke-width="0.9" fill="none" stroke-linejoin="round" stroke-linecap="round" />
<path d="M1182.7 321.3 Q1187 328 1192.7 329.9 Q1200 331 1209.7 327 L1229.7 312.8" stroke="#2e2e2e" stroke-width="1.12" fill="none" stroke-linejoin="round" stroke-linecap="round" />
<path d="M1185 323.5 Q1190 327 1195 327.5" stroke="#777" stroke-width="2.02" fill="none" stroke-linejoin="round" stroke-linecap="round" />
<path d="M1150 356.9 L1214 327 M1150 362.6 L1214 334.1" stroke="#2e2e2e" stroke-width="0.95" fill="none" stroke-linejoin="round" stroke-linecap="round" />
<path d="M1184 350 L1194 354 M1185.5 345.5 L1196 350.5" stroke="#2e2e2e" stroke-width="0.95" fill="none" stroke-linejoin="round" stroke-linecap="round" />
<ellipse cx="1196" cy="356" rx="3.3" ry="4.3" transform="rotate(-25 1196 356)" stroke="#2e2e2e" stroke-width="1.01" fill="none"/>
<path d="M1190 352 L1193.5 360 M1196.5 350.5 L1199 358" stroke="#2e2e2e" stroke-width="0.0" fill="none" stroke-linejoin="round" stroke-linecap="round" />
<path d="M1209.7 332.7 L1219 337 M1210 337.5 L1218 341.3" stroke="#2e2e2e" stroke-width="0.95" fill="none" stroke-linejoin="round" stroke-linecap="round" />
<ellipse cx="1219.5" cy="339" rx="2.8" ry="3.6" transform="rotate(-25 1219.5 339)" stroke="#2e2e2e" stroke-width="0.95" fill="none"/>
<path d="M1158.5 300 Q1166 310 1171.3 321.3 Q1176 332 1178.4 342.7 L1181.3 354 L1176 359 L1181 365" stroke="#2e2e2e" stroke-width="1.01" fill="none" stroke-linejoin="round" stroke-linecap="round" />
<path d="M1114.5 344.4 L1148 326.1 M1119.6 351.5 L1156.1 332.2" stroke="#2e2e2e" stroke-width="1.01" fill="none" stroke-linejoin="round" stroke-linecap="round" />
<path d="M1136 276 L1161 261.5 L1163.5 268 L1165 279 L1141 288 Z" fill="#d4d4d4"/>
<path d="M1134.5 275.0 Q1136.7 276.5 1138.4 280.5 L1171.0 334.0" stroke="#2e2e2e" stroke-width="0.95" fill="none" stroke-linejoin="round" stroke-linecap="round" />
<path d="M1139.7 272.6 Q1141.9 274.1 1143.3 280.5 L1175.9 334.0" stroke="#2e2e2e" stroke-width="0.95" fill="none" stroke-linejoin="round" stroke-linecap="round" />
<path d="M1144.9 270.2 Q1147.1 271.7 1148.2 280.5 L1180.8 334.0" stroke="#2e2e2e" stroke-width="0.95" fill="none" stroke-linejoin="round" stroke-linecap="round" />
<path d="M1150.1 267.8 Q1152.3 269.3 1153.1 280.5 L1185.7 334.0" stroke="#2e2e2e" stroke-width="0.95" fill="none" stroke-linejoin="round" stroke-linecap="round" />
<path d="M1155.3 265.4 Q1157.5 266.9 1158.0 280.5 L1190.6 334.0" stroke="#2e2e2e" stroke-width="0.95" fill="none" stroke-linejoin="round" stroke-linecap="round" />
<path d="M1160.5 263.0 Q1162.7 264.5 1162.9 280.5 L1195.5 334.0" stroke="#2e2e2e" stroke-width="0.95" fill="none" stroke-linejoin="round" stroke-linecap="round" />
<path d="M1134.5 275 L1162 259.8" stroke="#2e2e2e" stroke-width="1.12" fill="none" stroke-linejoin="round" stroke-linecap="round" />
<path d="M1136 272 L1165 258 M1140 275 L1166.5 262" stroke="#2e2e2e" stroke-width="0.9" fill="none" stroke-linejoin="round" stroke-linecap="round" />
<path d="M1125 273 L1137 280.4 L1155.5 298.8 L1173.8 323 L1177.4 340 M1125 276.5 L1135 282.5 L1151.5 301 L1168 323" stroke="#2e2e2e" stroke-width="1.01" fill="none" stroke-linejoin="round" stroke-linecap="round" />
<path d="M1114.9 228.5 L1121.7 225.1 L1127.1 228.5 L1120.3 232.5 Z" stroke="#2e2e2e" stroke-width="1.01" fill="none" stroke-linejoin="round" stroke-linecap="round" />
<circle cx="1121" cy="228.8" r="1.2" stroke="#2e2e2e" stroke-width="0.67" fill="none"/>
<path d="M1120.3 232.5 L1138 259 L1145 261 L1127.1 228.5" stroke="#2e2e2e" stroke-width="1.01" fill="#f2f2f2" stroke-linejoin="round" stroke-linecap="round" />
<path d="M1114.9 228.5 L1115.6 240.7 L1117.6 250.1 L1120.3 254.2 L1122 262 L1130 268" stroke="#2e2e2e" stroke-width="1.01" fill="none" stroke-linejoin="round" stroke-linecap="round" />
<path d="M1116 243 Q1121 241 1123 247 Q1123 253 1119 254 M1118 236 L1124 240 L1126 250 M1124 262 L1136 263" stroke="#2e2e2e" stroke-width="0.9" fill="none" stroke-linejoin="round" stroke-linecap="round" />
<path d="M1133.9 208.1 L1140.7 204.7 L1156.9 210.8 L1150.1 214.2 Z M1142.5 211 L1149 207.5" stroke="#2e2e2e" stroke-width="1.01" fill="none" stroke-linejoin="round" stroke-linecap="round" />
<circle cx="1138.8" cy="208.3" r="1.3" stroke="#2e2e2e" stroke-width="0.67" fill="none"/>
<circle cx="1151.5" cy="210.8" r="1.3" stroke="#2e2e2e" stroke-width="0.67" fill="none"/>
<path d="M1150.1 214.2 L1146 251.5 L1163.7 250.1 L1159.6 227.1 L1156.9 210.8" stroke="#2e2e2e" stroke-width="1.01" fill="#f4f4f4" stroke-linejoin="round" stroke-linecap="round" />
<path d="M1142.5 211 L1140 216 L1146 251.5" stroke="#2e2e2e" stroke-width="0.9" fill="none" stroke-linejoin="round" stroke-linecap="round" />
<path d="M1133.9 208.1 L1133.9 227.1 L1139.3 233.9 L1140 245 L1146 251.5" stroke="#2e2e2e" stroke-width="1.01" fill="none" stroke-linejoin="round" stroke-linecap="round" />
<path d="M1135 228 L1142 224 L1145 233 M1136 220 L1142 217" stroke="#2e2e2e" stroke-width="0.9" fill="none" stroke-linejoin="round" stroke-linecap="round" />
<path d="M1134.5 218 L1141 222 L1141.5 232" stroke="#9a9a9a" stroke-width="2.24" fill="none" stroke-linejoin="round" stroke-linecap="round" />
<path d="M1155 236 Q1153 240 1155 244 M1151 240 Q1149 242 1151 245" stroke="#2e2e2e" stroke-width="0.9" fill="none" stroke-linejoin="round" stroke-linecap="round" />
<path d="M1159.6 227.1 L1164 233 Q1167 232 1168 236 L1168 244" stroke="#2e2e2e" stroke-width="0.9" fill="none" stroke-linejoin="round" stroke-linecap="round" />
<path d="M1143.4 251.5 L1163.7 250.1 L1167.8 256.9 L1146 262.3 Z" stroke="#2e2e2e" stroke-width="1.01" fill="none" stroke-linejoin="round" stroke-linecap="round" />
<path d="M1147 257 L1163 253 M1148.5 259.5 L1164.5 255.5" stroke="#888" stroke-width="1.46" fill="none" stroke-linejoin="round" stroke-linecap="round" stroke-dasharray="1 1"/>
<path d="M1159.6 217.6 L1188 233.9 M1160.5 221 L1187 236 M1161.5 224.5 L1186 238.5 M1162.5 228 L1175 235" stroke="#2e2e2e" stroke-width="0.84" fill="none" stroke-linejoin="round" stroke-linecap="round" />
<path d="M1166.4 265.8 L1200.7 244.9 L1212.6 252.4 Q1219 255 1220 262.8 L1221.5 271.7 L1233 286 Q1237 291 1234.5 296 L1233.5 301.5 L1217 318 L1191.7 322.4 Q1187 322.5 1184.3 319.4 L1179.8 297 L1169.4 279.2 Q1164 272 1166.4 265.8 Z" stroke="#2e2e2e" stroke-width="1.12" fill="none" stroke-linejoin="round" stroke-linecap="round" />
<path d="M1163.5 270.5 Q1161 282 1166 290 L1176 303 L1181 324 Q1185 330 1192 329.5 L1218.5 324 L1236 306" stroke="#2e2e2e" stroke-width="1.01" fill="none" stroke-linejoin="round" stroke-linecap="round" />
<ellipse cx="1197.7" cy="279.9" rx="16.2" ry="19.4" transform="rotate(-12 1197.7 279.9)" stroke="#2e2e2e" stroke-width="1.12" fill="none"/>
<path d="M1173.3999999999999 267.7 A2.6 2.6 0 1 0 1173.3999999999999 271.3" stroke="#2e2e2e" stroke-width="1.01" fill="none" stroke-linejoin="round" stroke-linecap="round" />
<path d="M1206.2 249.79999999999998 A2.6 2.6 0 1 0 1206.2 253.4" stroke="#2e2e2e" stroke-width="1.01" fill="none" stroke-linejoin="round" stroke-linecap="round" />
<path d="M1216.6 261.7 A2.6 2.6 0 1 0 1216.6 265.3" stroke="#2e2e2e" stroke-width="1.01" fill="none" stroke-linejoin="round" stroke-linecap="round" />
<path d="M1231.5 288.59999999999997 A2.6 2.6 0 1 0 1231.5 292.2" stroke="#2e2e2e" stroke-width="1.01" fill="none" stroke-linejoin="round" stroke-linecap="round" />
<path d="M1191.3 311.7 A2.6 2.6 0 1 0 1191.3 315.3" stroke="#2e2e2e" stroke-width="1.01" fill="none" stroke-linejoin="round" stroke-linecap="round" />
<path d="M1196.2 306 L1221.5 295.6 L1224.5 303 L1199.2 315 Z M1199 309 L1221 300" stroke="#2e2e2e" stroke-width="1.01" fill="none" stroke-linejoin="round" stroke-linecap="round" />
<path d="M1176.8 244.9 L1193.2 237.5 L1196.2 246.4 L1181.3 256.8 Z" stroke="#2e2e2e" stroke-width="1.01" fill="none" stroke-linejoin="round" stroke-linecap="round" />
<path d="M1199.2 231.5 L1214.1 255.3 M1188 233.9 L1199.2 229 L1204 238" stroke="#2e2e2e" stroke-width="1.01" fill="none" stroke-linejoin="round" stroke-linecap="round" />
<path d="M1198.9 229.1 L1175.9 244.7" stroke="#2e2e2e" stroke-width="1.01" fill="none" stroke-linejoin="round" stroke-linecap="round" />
<path d="M1110 384 L1119.5 380.5 Q1123 381.5 1122 386 L1113 390.5 Q1108.5 391 1108 387.5 Q1107.5 385 1110 384 Z" stroke="#2e2e2e" stroke-width="1.01" fill="none" stroke-linejoin="round" stroke-linecap="round" />
<path d="M1110.5 384.5 Q1113 386 1112.5 390" stroke="#2e2e2e" stroke-width="0.9" fill="none" stroke-linejoin="round" stroke-linecap="round" />
<path d="M1264 272.5 L1272 269.5 Q1276 270 1275.5 274 L1268 279 Q1263 280.5 1262.5 277 Q1262 274 1264 272.5 Z" stroke="#2e2e2e" stroke-width="1.01" fill="none" stroke-linejoin="round" stroke-linecap="round" />
<path d="M1264.5 273 Q1267 274.5 1266.5 279" stroke="#2e2e2e" stroke-width="0.9" fill="none" stroke-linejoin="round" stroke-linecap="round" />
<ellipse cx="1264" cy="236" rx="9.4" ry="12.8" transform="rotate(-25 1264 236)" stroke="#2e2e2e" stroke-width="1.29" fill="none"/>
<ellipse cx="1263" cy="234.8" rx="7.0" ry="10.2" transform="rotate(-25 1263 234.8)" stroke="#2e2e2e" stroke-width="1.06" fill="none"/>
<ellipse cx="1263.8" cy="235.6" rx="7.6" ry="10.9" transform="rotate(-25 1263.8 235.6)" stroke="#777" stroke-width="0.67" fill="none"/>
<path d="M1056.4 341.6 Q1070.9 347.8 1069.7 358.8 Q1068.4 367.8 1059.9 367.8" stroke="#2e2e2e" stroke-width="1.01" fill="none" stroke-linejoin="round" stroke-linecap="round" />
<ellipse cx="1054.9" cy="355.8" rx="8.9" ry="12.7" transform="rotate(-22 1054.9 355.8)" stroke="#2e2e2e" stroke-width="1.12" fill="#fff"/>
<ellipse cx="1054.9" cy="355.8" rx="7.6" ry="11.2" transform="rotate(-22 1054.9 355.8)" stroke="#2e2e2e" stroke-width="0.78" fill="none"/>
<ellipse cx="1054.9" cy="355.8" rx="5.8" ry="8.6" transform="rotate(-22 1054.9 355.8)" stroke="#9a9a9a" stroke-width="2.46" fill="none"/>
<ellipse cx="1054.9" cy="355.8" rx="3.6" ry="5.6" transform="rotate(-22 1054.9 355.8)" stroke="#2e2e2e" stroke-width="0.9" fill="none"/>
<ellipse cx="1054.9" cy="355.8" rx="2.6" ry="4.4" transform="rotate(-22 1054.9 355.8)" stroke="#2e2e2e" stroke-width="0.67" fill="none"/>
<path d="M1079.5 327.40000000000003 Q1094 333.6 1092.8 344.6 Q1091.5 353.6 1083 353.6" stroke="#2e2e2e" stroke-width="1.01" fill="none" stroke-linejoin="round" stroke-linecap="round" />
<ellipse cx="1078" cy="341.6" rx="8.9" ry="12.7" transform="rotate(-22 1078 341.6)" stroke="#2e2e2e" stroke-width="1.12" fill="#fff"/>
<ellipse cx="1078" cy="341.6" rx="7.6" ry="11.2" transform="rotate(-22 1078 341.6)" stroke="#2e2e2e" stroke-width="0.78" fill="none"/>
<ellipse cx="1078" cy="341.6" rx="5.8" ry="8.6" transform="rotate(-22 1078 341.6)" stroke="#9a9a9a" stroke-width="2.46" fill="none"/>
<ellipse cx="1078" cy="341.6" rx="3.6" ry="5.6" transform="rotate(-22 1078 341.6)" stroke="#2e2e2e" stroke-width="0.9" fill="none"/>
<ellipse cx="1078" cy="341.6" rx="2.6" ry="4.4" transform="rotate(-22 1078 341.6)" stroke="#2e2e2e" stroke-width="0.67" fill="none"/>
<path d="M993 334 Q992 327.5 997 328 L1030 343.5 Q1034 343 1035 347 L1061 383 Q1065 382.5 1066 386.5 L1073.5 410 Q1077 413 1073 417 L1069 424" stroke="#2e2e2e" stroke-width="1.12" fill="none" stroke-linejoin="round" stroke-linecap="round" />
<path d="M997.5 336.5 L1027.5 350 L1057 388 L1067.5 412 L1064 422" stroke="#2e2e2e" stroke-width="0.95" fill="none" stroke-linejoin="round" stroke-linecap="round" />
<circle cx="996.5" cy="331.5" r="1.8" stroke="#2e2e2e" stroke-width="0.9" fill="none"/>
<circle cx="1031" cy="347.2" r="1.8" stroke="#2e2e2e" stroke-width="0.9" fill="none"/>
<circle cx="1062.2" cy="386.3" r="1.8" stroke="#2e2e2e" stroke-width="0.9" fill="none"/>
<circle cx="1072.5" cy="413.5" r="1.8" stroke="#2e2e2e" stroke-width="0.9" fill="none"/>
<path d="M984.7 335.3 L999.9 345.4 L1012.1 351.4 L1016.1 353.5 L1046.6 392.1 L1054.8 406.3 L1058.8 426.6 L1059 430.5" stroke="#2e2e2e" stroke-width="1.12" fill="none" stroke-linejoin="round" stroke-linecap="round" />
<path d="M975 339 L974.5 349 Q972 352 969.5 355.4 Q965.5 359 965.2 363 Q962.5 366 963 370.5 L963.5 380 L966.3 395 Q967 405 969 411 L975.5 426.6 Q980 434 985.7 438.8 L997.8 442.9 L1016.1 455.1 L1032.5 460.5 L1035 462" stroke="#2e2e2e" stroke-width="1.12" fill="none" stroke-linejoin="round" stroke-linecap="round" />
<path d="M963.5 380.3 L951.1 387.9 L956.5 400.9 L966.3 394.4" stroke="#2e2e2e" stroke-width="1.01" fill="none" stroke-linejoin="round" stroke-linecap="round" />
<path d="M971.4 416.5 L1003.9 430.7 L1006 438.8 M975 423 L1000 434" stroke="#2e2e2e" stroke-width="1.01" fill="none" stroke-linejoin="round" stroke-linecap="round" />
<path d="M975 339 L984.7 335.3 L986 346 L977.5 350.5 Z M977.5 350.5 L975.5 357 M986 346 L988 352" stroke="#2e2e2e" stroke-width="0.95" fill="none" stroke-linejoin="round" stroke-linecap="round" />
<path d="M985.8 346.7 L999.9 346.7 L1000.5 353.5 L989 357.5" stroke="#2e2e2e" stroke-width="0.95" fill="none" stroke-linejoin="round" stroke-linecap="round" />
<path d="M1015 357.5 L1030 371.6 M1013 361 L1028 375" stroke="#2e2e2e" stroke-width="0.9" fill="none" stroke-linejoin="round" stroke-linecap="round" />
<path d="M977.5 361.6 Q977 357 981 357.5 L1006 373.8 Q1013 376 1014.1 383 L1014.1 392.1 L1013 418.5 Q1011 422 1006 420 L987.7 414.4 Q979.5 410 977 403 L975.5 386 Z" stroke="#2e2e2e" stroke-width="1.12" fill="none" stroke-linejoin="round" stroke-linecap="round" />
<path d="M981 366 L1004 378 L1010 388 L1009 414 L989 409 L980 399 L979 370 Z" stroke="#2e2e2e" stroke-width="0.9" fill="none" stroke-linejoin="round" stroke-linecap="round" />
<circle cx="980.5" cy="361.5" r="1.8" stroke="#2e2e2e" stroke-width="0.9" fill="none"/>
<circle cx="1009.5" cy="380.5" r="1.8" stroke="#2e2e2e" stroke-width="0.9" fill="none"/>
<circle cx="1009.5" cy="416" r="1.8" stroke="#2e2e2e" stroke-width="0.9" fill="none"/>
<circle cx="982.5" cy="404" r="1.8" stroke="#2e2e2e" stroke-width="0.9" fill="none"/>
<ellipse cx="995.8" cy="390" rx="11.5" ry="15" transform="rotate(-15 995.8 390)" stroke="#2e2e2e" stroke-width="1.12" fill="none"/>
<ellipse cx="996.5" cy="390.5" rx="9.3" ry="12.5" transform="rotate(-15 996.5 390.5)" stroke="#2e2e2e" stroke-width="1.01" fill="none"/>
<ellipse cx="997.5" cy="391" rx="7" ry="10" transform="rotate(-15 997.5 391)" stroke="#2e2e2e" stroke-width="1.01" fill="none"/>
<path d="M988 380 Q992 376 998 378" stroke="#2e2e2e" stroke-width="0.78" fill="none" stroke-linejoin="round" stroke-linecap="round" />
<path d="M1020.3 370 L1044.7 390.3 M1027 370 L1049.5 389" stroke="#2e2e2e" stroke-width="0.95" fill="none" stroke-linejoin="round" stroke-linecap="round" />
<path d="M1033.9 394.4 Q1033 389.5 1038 389 L1046 387.5 Q1050 388 1049.5 393 L1047.5 397 L1041 400 Q1036 400 1033.9 394.4 Z" stroke="#2e2e2e" stroke-width="1.01" fill="none" stroke-linejoin="round" stroke-linecap="round" />
<ellipse cx="1038.5" cy="396.5" rx="1.8" ry="2.4" transform="rotate(-20 1038.5 396.5)" stroke="#2e2e2e" stroke-width="0.9" fill="none"/>
<path d="M1046 397 L1057 419 M1049.5 393 L1061 415" stroke="#2e2e2e" stroke-width="1.01" fill="none" stroke-linejoin="round" stroke-linecap="round" />
<path d="M1052 418 Q1052 413 1057 413 Q1062 414 1061.5 419 L1059.5 425 Q1054 427 1052.5 423 Z" stroke="#2e2e2e" stroke-width="1.01" fill="none" stroke-linejoin="round" stroke-linecap="round" />
<ellipse cx="1056.5" cy="420.5" rx="1.6" ry="2.2" transform="rotate(-20 1056.5 420.5)" stroke="#2e2e2e" stroke-width="0.9" fill="none"/>
<path d="M1012.1 355.5 L1030 371 M1016.1 365.7 L1028.5 395.8 L1036.6 403.9 L1040.7 424.2 L1040.7 428.3" stroke="#2e2e2e" stroke-width="0.95" fill="none" stroke-linejoin="round" stroke-linecap="round" />
<ellipse cx="1022.2" cy="408.3" rx="3.8" ry="5" transform="rotate(-20 1022.2 408.3)" stroke="#2e2e2e" stroke-width="0.95" fill="none"/>
<ellipse cx="1028.5" cy="435.1" rx="3.6" ry="3.9" transform="rotate(-20 1028.5 435.1)" stroke="#2e2e2e" stroke-width="0.95" fill="none"/>
<ellipse cx="1028.5" cy="435.1" rx="1.8" ry="2.1" transform="rotate(-20 1028.5 435.1)" stroke="#2e2e2e" stroke-width="0.78" fill="none"/>
<ellipse cx="1017.6" cy="443.2" rx="3.4" ry="3.7" transform="rotate(-20 1017.6 443.2)" stroke="#2e2e2e" stroke-width="0.95" fill="none"/>
<ellipse cx="1017.6" cy="443.2" rx="1.6" ry="1.9" transform="rotate(-20 1017.6 443.2)" stroke="#2e2e2e" stroke-width="0.78" fill="none"/>
<ellipse cx="989.7" cy="436.8" rx="4" ry="3.5" transform="rotate(0 989.7 436.8)" stroke="#2e2e2e" stroke-width="0.95" fill="none"/>
<path d="M1039 427 L1046 424.5 L1049 432 L1042 434.5 Z" stroke="#2e2e2e" stroke-width="0.95" fill="none" stroke-linejoin="round" stroke-linecap="round" />
<path d="M1046 432 L1058 430.8 M1046.5 449.5 L1060 450.5 M1046 432 Q1043 441 1046.5 449.5" stroke="#2e2e2e" stroke-width="1.01" fill="none" stroke-linejoin="round" stroke-linecap="round" />
<ellipse cx="1061.7" cy="440.5" rx="8" ry="10" transform="rotate(-15 1061.7 440.5)" stroke="#2e2e2e" stroke-width="1.12" fill="#fff"/>
<ellipse cx="1062.3" cy="440.8" rx="5.2" ry="7" transform="rotate(-15 1062.3 440.8)" stroke="#2e2e2e" stroke-width="1.01" fill="none"/>
<ellipse cx="1063" cy="441" rx="3.4" ry="5" transform="rotate(-15 1063 441)" stroke="#2e2e2e" stroke-width="0.9" fill="none"/>
<path d="M1035 453 L1036 465 Q1037 468.5 1040.5 467.8 L1047 465.5 Q1050 464 1050 461 L1050.5 450 M1042 455 L1042.5 465.5 M1045.5 454 L1046 464.5" stroke="#2e2e2e" stroke-width="0.95" fill="none" stroke-linejoin="round" stroke-linecap="round" />
<circle cx="1038.2" cy="466.2" r="1.9" stroke="#2e2e2e" stroke-width="0.9" fill="none"/>
<path d="M932.5 325.9 L973.8 303.6" stroke="#3a3a3a" stroke-width="6.27" fill="none" stroke-linejoin="round" stroke-linecap="round" />
<path d="M932.5 325.9 L973.8 303.6" stroke="#fff" stroke-width="4.03" fill="none" stroke-linejoin="round" stroke-linecap="round" />
<path d="M934.5 324.8 L948 317.5 M956.5 312.8 L972 304.5" stroke="#9a9a9a" stroke-width="3.81" fill="none" stroke-linejoin="round" stroke-linecap="round" stroke-dasharray="0.9 1.1"/>
<ellipse cx="951" cy="315" rx="4.6" ry="5.8" transform="rotate(-30 951 315)" stroke="#2e2e2e" stroke-width="1.12" fill="#fff"/>
<ellipse cx="950" cy="315.6" rx="2.6" ry="4.2" transform="rotate(-30 950 315.6)" stroke="#2e2e2e" stroke-width="0.9" fill="none"/>
<ellipse cx="945.6" cy="418.6" rx="9.4" ry="12.2" transform="rotate(-25 945.6 418.6)" stroke="#2e2e2e" stroke-width="1.29" fill="none"/>
<ellipse cx="944.6" cy="417.4" rx="7.0" ry="9.6" transform="rotate(-25 944.6 417.4)" stroke="#2e2e2e" stroke-width="1.06" fill="none"/>
<ellipse cx="945.4" cy="418.2" rx="7.6" ry="10.3" transform="rotate(-25 945.4 418.2)" stroke="#777" stroke-width="0.67" fill="none"/>
<path d="M989 464.5 L1000.2 459" stroke="#3a3a3a" stroke-width="5.15" fill="none" stroke-linejoin="round" stroke-linecap="round" />
<path d="M989 464.5 L1000.2 459" stroke="#fff" stroke-width="3.14" fill="none" stroke-linejoin="round" stroke-linecap="round" />
<path d="M990.5 463.8 L999.5 459.4" stroke="#999" stroke-width="2.91" fill="none" stroke-linejoin="round" stroke-linecap="round" stroke-dasharray="0.8 1"/>
<path d="M981 464.5 L985.5 462.5 L989.5 465 L989.5 470 L985 472.5 L981 470 Z" stroke="#2e2e2e" stroke-width="1.12" fill="#fff" stroke-linejoin="round" stroke-linecap="round" />
<path d="M985.5 462.5 L985.5 467.5 L989.5 470 M985.5 467.5 L981 470" stroke="#2e2e2e" stroke-width="0.78" fill="none" stroke-linejoin="round" stroke-linecap="round" /></g></svg>
<svg class="a" style="left:0;top:0" width="1600" height="80" viewBox="0 0 1600 80"><g><path d="M575.9 65.0 L580.3 60.6" stroke="#10106a" stroke-width="4" stroke-linecap="round"/><path d="M575.5 64.5 L579.7 60.2" stroke="#2a8fe0" stroke-width="1.8" stroke-linecap="round"/><circle cx="585.5" cy="55.2" r="6.3" fill="#e8e8e8" stroke="#1e1e1e" stroke-width="1.7"/><path d="M581.5 55.2 A4 4 0 0 1 585.5 51.2" stroke="#fff" stroke-width="1.2" fill="none"/><path d="M582.1 55.2 H588.9 M585.5 51.8 V58.6" stroke="#000" stroke-width="2.2"/></g><g><path d="M602.6 65.0 L607.0 60.6" stroke="#10106a" stroke-width="4" stroke-linecap="round"/><path d="M602.2 64.5 L606.4 60.2" stroke="#2a8fe0" stroke-width="1.8" stroke-linecap="round"/><circle cx="612.2" cy="55.2" r="6.3" fill="#e8e8e8" stroke="#1e1e1e" stroke-width="1.7"/><path d="M608.2 55.2 A4 4 0 0 1 612.2 51.2" stroke="#fff" stroke-width="1.2" fill="none"/><path d="M608.6 55.2 H615.8" stroke="#000" stroke-width="2.2"/></g><path d="M639.5 48 L632 57.5 L637 57.5 L630.5 65.5 L643.5 54.8 L638.5 54.8 L644 48 Z" fill="#1a1a1a"/><path d="M639.3 48.8 L633.2 56.6 L637.8 56.6 L632.6 63.6 L641.8 55.6 L637.4 55.6 L642.2 48.8 Z" fill="#f6e23a"/><path d="M637.8 56.6 L632.6 63.6 L641.8 55.6 Z" fill="#e8a020"/><path d="M636 50 L632 55" stroke="#888" stroke-width="0.8"/><path d="M656 59.5 L662 54 L665 61 L660 64 Z" fill="#10108a"/><circle cx="665" cy="59.5" r="4.2" fill="#1a80b0"/><path d="M660.5 54 Q664 49 668.5 52.5" stroke="#f0d040" stroke-width="2.4" fill="none"/><path d="M658 55.5 L662 57 M662 52 L662 64 M669.5 52 L669.5 64 M662 64 L669.5 64" stroke="#111" stroke-width="0.9" fill="none" stroke-dasharray="1.2 1.2"/><rect x="659.9" y="48.4" width="3.2" height="3.2" rx="0.8" fill="#1a1a1a"/><rect x="667.9" y="48.4" width="3.2" height="3.2" rx="0.8" fill="#1a1a1a"/><rect x="653.4" y="53.9" width="3.2" height="3.2" rx="0.8" fill="#1a1a1a"/><rect x="653.4" y="59.9" width="3.2" height="3.2" rx="0.8" fill="#1a1a1a"/><rect x="667.9" y="57.4" width="3.2" height="3.2" rx="0.8" fill="#1a1a1a"/><rect x="658.9" y="63.9" width="3.2" height="3.2" rx="0.8" fill="#1a1a1a"/><rect x="666.9" y="63.9" width="3.2" height="3.2" rx="0.8" fill="#1a1a1a"/><path d="M682.5 50 L694 50 L695 52 L693 57 L682 57 L680 55 Z" fill="#e8e8e8" stroke="#555" stroke-width="0.9"/><path d="M684 52.5 H691 M684 54.5 H690" stroke="#777" stroke-width="0.8"/><path d="M679.5 57 L695.5 56 Q698 58 697.5 61 L697 64 L681 66 Q679 65 679.2 62 Z" fill="#dcdcdc" stroke="#2a2a2a" stroke-width="1.1"/><path d="M680 59.5 L696.5 58.5" stroke="#999" stroke-width="0.8"/><path d="M681.5 63.5 L696 62.5 L696.5 64.5 L682 66 Z" fill="#8a8a8a"/><path d="M694 55 Q698 55.5 697.5 60 L696.5 63" stroke="#333" stroke-width="1.6" fill="none"/><path d="M1584.5 18 L1590.5 18.5 L1598.5 29 Q1594 31.5 1588 32 L1582 24.5 Z" fill="#f2f2f2" stroke="#1a1a1a" stroke-width="1.1"/><path d="M1587 24 L1592 27 L1589 29" stroke="#aaa" stroke-width="1.2" fill="none"/><path d="M1583.3 14.5 L1587.5 14.5 L1588 24 L1582 26 Q1580.5 24 1581.2 21 Z" fill="#0f1a3a"/><path d="M1584.5 16.5 L1585.5 22" stroke="#3a6ab0" stroke-width="1.1"/></svg>
</body></html>
